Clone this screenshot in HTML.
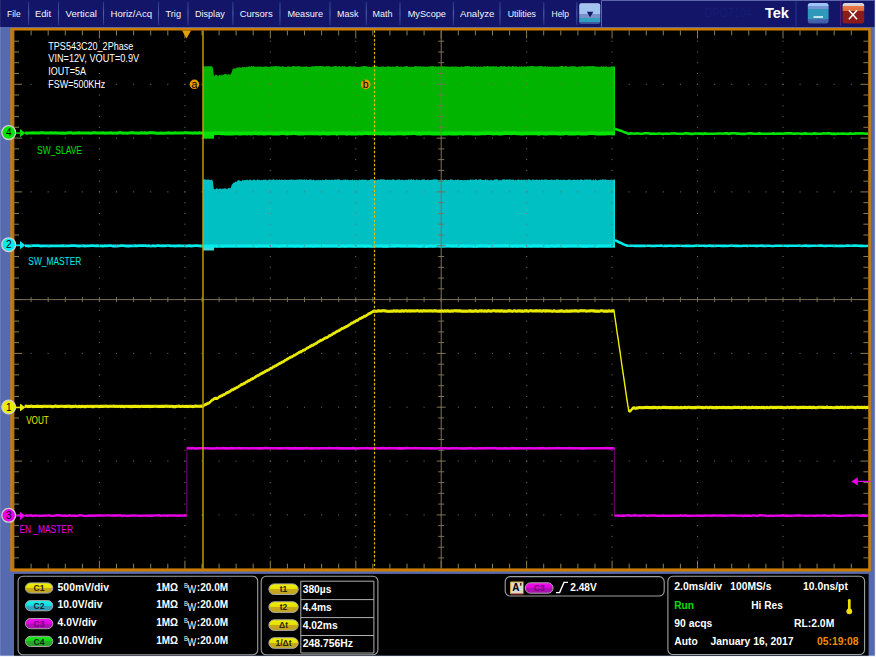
<!DOCTYPE html>
<html><head><meta charset="utf-8"><title>TPS543C20 scope capture</title>
<style>html,body{margin:0;padding:0;background:#566ab0;overflow:hidden}svg{display:block;font-family:"Liberation Sans",sans-serif}</style>
</head><body>
<svg width="876" height="657" viewBox="0 0 876 657">
<rect x="0" y="0" width="876" height="657" fill="#566ab0"/>
<rect x="0" y="0" width="874.8" height="27" fill="#121568"/>
<rect x="0" y="0" width="1" height="27" fill="#232a70"/>
<rect x="0" y="27" width="1" height="630" fill="#6878b8"/>
<rect x="874.8" y="0" width="1.2" height="657" fill="#f4f5fa"/>
<rect x="0" y="655.7" width="876" height="1.3" fill="#f4f5fa"/>
<path d="M601.5 27V0.5H875" stroke="#5a64a8" stroke-width="1" fill="none"/>
<text x="7" y="16.7" font-size="9" fill="#f4f4fa" textLength="13.6" lengthAdjust="spacingAndGlyphs" >File</text>
<text x="35" y="16.7" font-size="9" fill="#f4f4fa" textLength="16" lengthAdjust="spacingAndGlyphs" >Edit</text>
<text x="65.5" y="16.7" font-size="9" fill="#f4f4fa" textLength="31.5" lengthAdjust="spacingAndGlyphs" >Vertical</text>
<text x="110.5" y="16.7" font-size="9" fill="#f4f4fa" textLength="41.5" lengthAdjust="spacingAndGlyphs" >Horiz/Acq</text>
<text x="165.5" y="16.7" font-size="9" fill="#f4f4fa" textLength="15.5" lengthAdjust="spacingAndGlyphs" >Trig</text>
<text x="195" y="16.7" font-size="9" fill="#f4f4fa" textLength="29.7" lengthAdjust="spacingAndGlyphs" >Display</text>
<text x="239.7" y="16.7" font-size="9" fill="#f4f4fa" textLength="32.9" lengthAdjust="spacingAndGlyphs" >Cursors</text>
<text x="287.4" y="16.7" font-size="9" fill="#f4f4fa" textLength="35.6" lengthAdjust="spacingAndGlyphs" >Measure</text>
<text x="337" y="16.7" font-size="9" fill="#f4f4fa" textLength="21.4" lengthAdjust="spacingAndGlyphs" >Mask</text>
<text x="372.6" y="16.7" font-size="9" fill="#f4f4fa" textLength="20.0" lengthAdjust="spacingAndGlyphs" >Math</text>
<text x="407.7" y="16.7" font-size="9" fill="#f4f4fa" textLength="38.3" lengthAdjust="spacingAndGlyphs" >MyScope</text>
<text x="460" y="16.7" font-size="9" fill="#f4f4fa" textLength="34.5" lengthAdjust="spacingAndGlyphs" >Analyze</text>
<text x="507.7" y="16.7" font-size="9" fill="#f4f4fa" textLength="28.3" lengthAdjust="spacingAndGlyphs" >Utilities</text>
<text x="551.5" y="16.7" font-size="9" fill="#f4f4fa" textLength="17.5" lengthAdjust="spacingAndGlyphs" >Help</text>
<defs><linearGradient id="sepg" x1="0" y1="0" x2="0" y2="1"><stop offset="0" stop-color="#2a3484"/><stop offset="0.5" stop-color="#4c60b0"/><stop offset="1" stop-color="#2a3484"/></linearGradient></defs>
<rect x="28.05" y="2" width="1.1" height="23" fill="url(#sepg)"/>
<rect x="57.95" y="2" width="1.1" height="23" fill="url(#sepg)"/>
<rect x="102.95" y="2" width="1.1" height="23" fill="url(#sepg)"/>
<rect x="157.95" y="2" width="1.1" height="23" fill="url(#sepg)"/>
<rect x="187.45" y="2" width="1.1" height="23" fill="url(#sepg)"/>
<rect x="232.35" y="2" width="1.1" height="23" fill="url(#sepg)"/>
<rect x="279.45" y="2" width="1.1" height="23" fill="url(#sepg)"/>
<rect x="329.45" y="2" width="1.1" height="23" fill="url(#sepg)"/>
<rect x="365.75" y="2" width="1.1" height="23" fill="url(#sepg)"/>
<rect x="399.45" y="2" width="1.1" height="23" fill="url(#sepg)"/>
<rect x="452.85" y="2" width="1.1" height="23" fill="url(#sepg)"/>
<rect x="499.45" y="2" width="1.1" height="23" fill="url(#sepg)"/>
<rect x="543.25" y="2" width="1.1" height="23" fill="url(#sepg)"/>
<rect x="576.25" y="2" width="1.1" height="23" fill="url(#sepg)"/>
<path d="M796 1V26" stroke="#2c3688" stroke-width="1" fill="none"/>
<path d="M840.7 1V26" stroke="#5a2080" stroke-width="1" fill="none"/>
<defs>
<linearGradient id="gdd" x1="0" y1="0" x2="0" y2="1"><stop offset="0" stop-color="#c4d4f2"/><stop offset="0.07" stop-color="#a2c2f0"/><stop offset="0.52" stop-color="#a2c2f0"/><stop offset="0.53" stop-color="#7a90c8"/><stop offset="0.7" stop-color="#7a90c8"/><stop offset="0.71" stop-color="#30a0c0"/><stop offset="0.9" stop-color="#30a0c0"/><stop offset="0.91" stop-color="#4060a8"/><stop offset="1" stop-color="#3a5090"/></linearGradient>
<linearGradient id="gmin" x1="0" y1="0" x2="0" y2="1"><stop offset="0" stop-color="#9cc4f4"/><stop offset="0.16" stop-color="#9cc4f4"/><stop offset="0.17" stop-color="#7494d4"/><stop offset="0.3" stop-color="#7494d4"/><stop offset="0.31" stop-color="#3098b8"/><stop offset="0.78" stop-color="#3098b8"/><stop offset="0.79" stop-color="#4868b0"/><stop offset="1" stop-color="#3c5aa0"/></linearGradient>
<linearGradient id="gcls" x1="0" y1="0" x2="0" y2="1"><stop offset="0" stop-color="#e0d8d8"/><stop offset="0.15" stop-color="#d8cccc"/><stop offset="0.16" stop-color="#e87848"/><stop offset="0.38" stop-color="#e06838"/><stop offset="0.39" stop-color="#8c1c1c"/><stop offset="1" stop-color="#8c1c1c"/></linearGradient>
<linearGradient id="by" x1="0" y1="0" x2="0" y2="1"><stop offset="0" stop-color="#f0f000"/><stop offset="0.5" stop-color="#e4e000"/><stop offset="0.51" stop-color="#c8a81c"/><stop offset="1" stop-color="#c0a420"/></linearGradient>
<linearGradient id="bc" x1="0" y1="0" x2="0" y2="1"><stop offset="0" stop-color="#20f0f0"/><stop offset="0.5" stop-color="#10dce0"/><stop offset="0.51" stop-color="#30a8c0"/><stop offset="1" stop-color="#30a0b8"/></linearGradient>
<linearGradient id="bm" x1="0" y1="0" x2="0" y2="1"><stop offset="0" stop-color="#f010f0"/><stop offset="0.5" stop-color="#e000e0"/><stop offset="0.51" stop-color="#b010b8"/><stop offset="1" stop-color="#a810b0"/></linearGradient>
<linearGradient id="bg" x1="0" y1="0" x2="0" y2="1"><stop offset="0" stop-color="#20e820"/><stop offset="0.5" stop-color="#10d810"/><stop offset="0.51" stop-color="#28a828"/><stop offset="1" stop-color="#28a028"/></linearGradient>
</defs>
<rect x="579.2" y="3.2" width="21" height="20.8" rx="2" fill="url(#gdd)"/>
<path d="M586.8 11.8h6.6l-3.3 5.4z" fill="#121568"/>
<text x="704.5" y="17" font-size="12" fill="#181c72" textLength="47.5" lengthAdjust="spacingAndGlyphs" >DPO7104</text>
<text x="764.9" y="18" font-size="14" fill="#fff" font-weight="bold" textLength="24" lengthAdjust="spacingAndGlyphs" >Tek</text>
<rect x="807.8" y="3" width="20.8" height="20.6" rx="2.5" fill="url(#gmin)"/>
<path d="M813.5 17H823" stroke="#fff" stroke-width="1.4"/>
<rect x="842.6" y="3" width="21.6" height="20.4" rx="2.5" fill="url(#gcls)"/>
<path d="M848.9 10.3L857 19.3M857 10.3L848.9 19.3" stroke="#fff" stroke-width="1.5"/>
<rect x="14" y="573.9" width="854.6" height="81.7" fill="#000"/>
<rect x="18.1" y="576.2" width="239.6" height="78.6" rx="5" fill="#000" stroke="#a0a0a0" stroke-width="1.1"/>
<rect x="261.2" y="576.2" width="116.7" height="78.6" rx="5" fill="#000" stroke="#a0a0a0" stroke-width="1.1"/>
<rect x="505.2" y="576.6" width="159.0" height="19.4" rx="5" fill="#000" stroke="#a0a0a0" stroke-width="1.1"/>
<rect x="667.9" y="576.2" width="196.7" height="78.3" rx="5" fill="#000" stroke="#a0a0a0" stroke-width="1.1"/>
<rect x="25.4" y="582.9" width="27.4" height="10.2" rx="5.1" fill="url(#by)" stroke="#a8a8a8" stroke-width="1"/><text x="39.099999999999994" y="591.1" font-size="8.6" font-weight="bold" text-anchor="middle" fill="#2c2800">C1</text>
<text x="57.6" y="590.6" font-size="10" fill="#fff" font-weight="bold" textLength="51.4" lengthAdjust="spacingAndGlyphs" >500mV/div</text>
<text x="156.2" y="590.6" font-size="10" fill="#fff" font-weight="bold" textLength="21.8" lengthAdjust="spacingAndGlyphs" >1MΩ</text>
<text x="183.9" y="587.8" font-size="7" fill="#fff" textLength="3.9" lengthAdjust="spacingAndGlyphs" >B</text>
<text x="187.5" y="593" font-size="10" fill="#fff" textLength="8.7" lengthAdjust="spacingAndGlyphs" >W</text>
<text x="196.8" y="590.6" font-size="10" fill="#fff" font-weight="bold" textLength="31.3" lengthAdjust="spacingAndGlyphs" >:20.0M</text>
<rect x="25.4" y="600.6" width="27.4" height="10.2" rx="5.1" fill="url(#bc)" stroke="#a8a8a8" stroke-width="1"/><text x="39.099999999999994" y="608.8" font-size="8.6" font-weight="bold" text-anchor="middle" fill="#08282c">C2</text>
<text x="57.6" y="608.3" font-size="10" fill="#fff" font-weight="bold" textLength="44.8" lengthAdjust="spacingAndGlyphs" >10.0V/div</text>
<text x="156.2" y="608.3" font-size="10" fill="#fff" font-weight="bold" textLength="21.8" lengthAdjust="spacingAndGlyphs" >1MΩ</text>
<text x="183.9" y="605.5" font-size="7" fill="#fff" textLength="3.9" lengthAdjust="spacingAndGlyphs" >B</text>
<text x="187.5" y="610.7" font-size="10" fill="#fff" textLength="8.7" lengthAdjust="spacingAndGlyphs" >W</text>
<text x="196.8" y="608.3" font-size="10" fill="#fff" font-weight="bold" textLength="31.3" lengthAdjust="spacingAndGlyphs" >:20.0M</text>
<rect x="25.4" y="618.5" width="27.4" height="10.2" rx="5.1" fill="url(#bm)" stroke="#a8a8a8" stroke-width="1"/><text x="39.099999999999994" y="626.7" font-size="8.6" font-weight="bold" text-anchor="middle" fill="#780078">C3</text>
<text x="57.6" y="626.2" font-size="10" fill="#fff" font-weight="bold" textLength="39" lengthAdjust="spacingAndGlyphs" >4.0V/div</text>
<text x="156.2" y="626.2" font-size="10" fill="#fff" font-weight="bold" textLength="21.8" lengthAdjust="spacingAndGlyphs" >1MΩ</text>
<text x="183.9" y="623.4" font-size="7" fill="#fff" textLength="3.9" lengthAdjust="spacingAndGlyphs" >B</text>
<text x="187.5" y="628.6" font-size="10" fill="#fff" textLength="8.7" lengthAdjust="spacingAndGlyphs" >W</text>
<text x="196.8" y="626.2" font-size="10" fill="#fff" font-weight="bold" textLength="31.3" lengthAdjust="spacingAndGlyphs" >:20.0M</text>
<rect x="25.4" y="636.3" width="27.4" height="10.2" rx="5.1" fill="url(#bg)" stroke="#a8a8a8" stroke-width="1"/><text x="39.099999999999994" y="644.5" font-size="8.6" font-weight="bold" text-anchor="middle" fill="#082808">C4</text>
<text x="57.6" y="644.0" font-size="10" fill="#fff" font-weight="bold" textLength="44.8" lengthAdjust="spacingAndGlyphs" >10.0V/div</text>
<text x="156.2" y="644.0" font-size="10" fill="#fff" font-weight="bold" textLength="21.8" lengthAdjust="spacingAndGlyphs" >1MΩ</text>
<text x="183.9" y="641.2" font-size="7" fill="#fff" textLength="3.9" lengthAdjust="spacingAndGlyphs" >B</text>
<text x="187.5" y="646.4" font-size="10" fill="#fff" textLength="8.7" lengthAdjust="spacingAndGlyphs" >W</text>
<text x="196.8" y="644.0" font-size="10" fill="#fff" font-weight="bold" textLength="31.3" lengthAdjust="spacingAndGlyphs" >:20.0M</text>
<path d="M300.8 581.2H373.9V653H300.8ZM300.8 599.6H373.9M300.8 617.6H373.9M300.8 635.5H373.9" stroke="#b0b0b0" stroke-width="1" fill="none"/>
<rect x="268.9" y="583.9" width="29.3" height="10.6" rx="5.3" fill="url(#by)" stroke="#a8a8a8" stroke-width="1"/><text x="283.54999999999995" y="592.3" font-size="8.5" font-weight="bold" text-anchor="middle" fill="#2c2800">t1</text>
<text x="302.7" y="593.2" font-size="10.5" fill="#fff" font-weight="bold" textLength="28.8" lengthAdjust="spacingAndGlyphs" >380µs</text>
<rect x="268.9" y="601.8" width="29.3" height="10.6" rx="5.3" fill="url(#by)" stroke="#a8a8a8" stroke-width="1"/><text x="283.54999999999995" y="610.2" font-size="8.5" font-weight="bold" text-anchor="middle" fill="#2c2800">t2</text>
<text x="302.7" y="611.1" font-size="10.5" fill="#fff" font-weight="bold" textLength="29" lengthAdjust="spacingAndGlyphs" >4.4ms</text>
<rect x="268.9" y="619.8" width="29.3" height="10.6" rx="5.3" fill="url(#by)" stroke="#a8a8a8" stroke-width="1"/><text x="283.54999999999995" y="628.2" font-size="8.5" font-weight="bold" text-anchor="middle" fill="#2c2800">Δt</text>
<text x="302.7" y="629.1" font-size="10.5" fill="#fff" font-weight="bold" textLength="35" lengthAdjust="spacingAndGlyphs" >4.02ms</text>
<rect x="268.9" y="637.7" width="29.3" height="10.6" rx="5.3" fill="url(#by)" stroke="#a8a8a8" stroke-width="1"/><text x="283.54999999999995" y="646.1" font-size="8.5" font-weight="bold" text-anchor="middle" fill="#2c2800">1/Δt</text>
<text x="302.7" y="647" font-size="10.5" fill="#fff" font-weight="bold" textLength="50.3" lengthAdjust="spacingAndGlyphs" >248.756Hz</text>
<rect x="510.6" y="582" width="13" height="11.9" fill="#dcdccc"/>
<path d="M510.6 594V582H523.6" stroke="#d8b040" stroke-width="1" fill="none"/><path d="M510.6 594H523.6V582" stroke="#c03020" stroke-width="1" fill="none"/>
<text x="512.3" y="591.3" font-size="10.5" fill="#000" font-weight="bold" textLength="9.6" lengthAdjust="spacingAndGlyphs" >A'</text>
<rect x="525.3" y="582.8" width="27.8" height="10.4" rx="5.2" fill="url(#bm)" stroke="#a8a8a8" stroke-width="1"/><text x="539.1999999999999" y="591.1" font-size="8.6" font-weight="bold" text-anchor="middle" fill="#780078">C3</text>
<path d="M556 592.6H559.6L564 582.4H568" stroke="#fff" stroke-width="1.4" fill="none"/>
<text x="570.3" y="590.7" font-size="10.5" fill="#fff" font-weight="bold" textLength="26.4" lengthAdjust="spacingAndGlyphs" >2.48V</text>
<text x="674.3" y="590.3" font-size="10.5" fill="#fff" font-weight="bold" textLength="47.7" lengthAdjust="spacingAndGlyphs" >2.0ms/div</text>
<text x="730.3" y="590.3" font-size="10.5" fill="#fff" font-weight="bold" textLength="41.1" lengthAdjust="spacingAndGlyphs" >100MS/s</text>
<text x="803" y="590.3" font-size="10.5" fill="#fff" font-weight="bold" textLength="44.9" lengthAdjust="spacingAndGlyphs" >10.0ns/pt</text>
<text x="674.3" y="608.8" font-size="10.5" fill="#00e000" font-weight="bold" textLength="19.7" lengthAdjust="spacingAndGlyphs" >Run</text>
<text x="751.2" y="608.8" font-size="10.5" fill="#fff" font-weight="bold" textLength="31.6" lengthAdjust="spacingAndGlyphs" >Hi Res</text>
<path d="M849.3 600.3V611" stroke="#f0e000" stroke-width="2.7" stroke-linecap="round"/><circle cx="849.3" cy="611.3" r="2.9" fill="#f0e000"/>
<text x="674.3" y="626.6" font-size="10.5" fill="#fff" font-weight="bold" textLength="38" lengthAdjust="spacingAndGlyphs" >90 acqs</text>
<text x="793.9" y="626.6" font-size="10.5" fill="#fff" font-weight="bold" textLength="40.4" lengthAdjust="spacingAndGlyphs" >RL:2.0M</text>
<text x="674.3" y="644.6" font-size="10.5" fill="#fff" font-weight="bold" textLength="23.4" lengthAdjust="spacingAndGlyphs" >Auto</text>
<text x="710.5" y="644.6" font-size="10.5" fill="#fff" font-weight="bold" textLength="83.1" lengthAdjust="spacingAndGlyphs" >January 16, 2017</text>
<text x="817" y="644.6" font-size="10.5" fill="#f08c00" font-weight="bold" textLength="41.5" lengthAdjust="spacingAndGlyphs" >05:19:08</text>
<rect x="10.3" y="27.9" width="860.5" height="543.6" fill="#cc7c00"/>
<rect x="12.5" y="30" width="2" height="538.8" fill="#a87428"/>
<rect x="14.4" y="30.5" width="853.8" height="537.9" fill="#000"/>
<path d="M31.1 30.45v5M31.1 568.7v-5M48.2 30.45v5M48.2 568.7v-5M65.3 30.45v5M65.3 568.7v-5M82.4 30.45v5M82.4 568.7v-5M99.4 30.45v8M99.4 568.7v-8M116.5 30.45v5M116.5 568.7v-5M133.6 30.45v5M133.6 568.7v-5M150.7 30.45v5M150.7 568.7v-5M167.8 30.45v5M167.8 568.7v-5M184.9 30.45v8M184.9 568.7v-8M202.0 30.45v5M202.0 568.7v-5M219.1 30.45v5M219.1 568.7v-5M236.1 30.45v5M236.1 568.7v-5M253.2 30.45v5M253.2 568.7v-5M270.3 30.45v8M270.3 568.7v-8M287.4 30.45v5M287.4 568.7v-5M304.5 30.45v5M304.5 568.7v-5M321.6 30.45v5M321.6 568.7v-5M338.7 30.45v5M338.7 568.7v-5M355.8 30.45v8M355.8 568.7v-8M372.8 30.45v5M372.8 568.7v-5M389.9 30.45v5M389.9 568.7v-5M407.0 30.45v5M407.0 568.7v-5M424.1 30.45v5M424.1 568.7v-5M441.2 30.45v8M441.2 568.7v-8M458.3 30.45v5M458.3 568.7v-5M475.4 30.45v5M475.4 568.7v-5M492.5 30.45v5M492.5 568.7v-5M509.6 30.45v5M509.6 568.7v-5M526.6 30.45v8M526.6 568.7v-8M543.7 30.45v5M543.7 568.7v-5M560.8 30.45v5M560.8 568.7v-5M577.9 30.45v5M577.9 568.7v-5M595.0 30.45v5M595.0 568.7v-5M612.1 30.45v8M612.1 568.7v-8M629.2 30.45v5M629.2 568.7v-5M646.3 30.45v5M646.3 568.7v-5M663.3 30.45v5M663.3 568.7v-5M680.4 30.45v5M680.4 568.7v-5M697.5 30.45v8M697.5 568.7v-8M714.6 30.45v5M714.6 568.7v-5M731.7 30.45v5M731.7 568.7v-5M748.8 30.45v5M748.8 568.7v-5M765.9 30.45v5M765.9 568.7v-5M783.0 30.45v8M783.0 568.7v-8M800.0 30.45v5M800.0 568.7v-5M817.1 30.45v5M817.1 568.7v-5M834.2 30.45v5M834.2 568.7v-5M851.3 30.45v5M851.3 568.7v-5M14.0 41.2h5M868.4 41.2h-5M14.0 52.0h5M868.4 52.0h-5M14.0 62.7h5M868.4 62.7h-5M14.0 73.5h5M868.4 73.5h-5M14.0 84.3h8M868.4 84.3h-8M14.0 95.0h5M868.4 95.0h-5M14.0 105.8h5M868.4 105.8h-5M14.0 116.6h5M868.4 116.6h-5M14.0 127.3h5M868.4 127.3h-5M14.0 138.1h8M868.4 138.1h-8M14.0 148.9h5M868.4 148.9h-5M14.0 159.6h5M868.4 159.6h-5M14.0 170.4h5M868.4 170.4h-5M14.0 181.2h5M868.4 181.2h-5M14.0 191.9h8M868.4 191.9h-8M14.0 202.7h5M868.4 202.7h-5M14.0 213.5h5M868.4 213.5h-5M14.0 224.2h5M868.4 224.2h-5M14.0 235.0h5M868.4 235.0h-5M14.0 245.8h8M868.4 245.8h-8M14.0 256.5h5M868.4 256.5h-5M14.0 267.3h5M868.4 267.3h-5M14.0 278.0h5M868.4 278.0h-5M14.0 288.8h5M868.4 288.8h-5M14.0 299.6h8M868.4 299.6h-8M14.0 310.3h5M868.4 310.3h-5M14.0 321.1h5M868.4 321.1h-5M14.0 331.9h5M868.4 331.9h-5M14.0 342.6h5M868.4 342.6h-5M14.0 353.4h8M868.4 353.4h-8M14.0 364.2h5M868.4 364.2h-5M14.0 374.9h5M868.4 374.9h-5M14.0 385.7h5M868.4 385.7h-5M14.0 396.5h5M868.4 396.5h-5M14.0 407.2h8M868.4 407.2h-8M14.0 418.0h5M868.4 418.0h-5M14.0 428.8h5M868.4 428.8h-5M14.0 439.5h5M868.4 439.5h-5M14.0 450.3h5M868.4 450.3h-5M14.0 461.1h8M868.4 461.1h-8M14.0 471.8h5M868.4 471.8h-5M14.0 482.6h5M868.4 482.6h-5M14.0 493.3h5M868.4 493.3h-5M14.0 504.1h5M868.4 504.1h-5M14.0 514.9h8M868.4 514.9h-8M14.0 525.6h5M868.4 525.6h-5M14.0 536.4h5M868.4 536.4h-5M14.0 547.2h5M868.4 547.2h-5M14.0 557.9h5M868.4 557.9h-5" stroke="#8c7c50" stroke-width="1" fill="none"/>
<path d="M203.0 135L203.0 66.3L203.9 66.1L204.8 66.7L205.7 66.0L206.6 66.5L207.5 66.3L208.4 66.0L209.3 66.5L210.2 65.9L211.1 66.4L212.0 66.0L212.9 68.0L213.8 75.3L214.7 75.9L215.6 74.6L216.5 74.7L217.4 75.4L218.3 75.9L219.2 75.2L220.1 74.8L221.0 75.8L221.9 74.1L222.8 75.5L223.7 74.4L224.6 74.1L225.5 74.0L226.4 74.3L227.3 75.1L228.2 73.9L229.1 74.6L230.0 74.7L230.9 74.1L231.8 72.1L232.7 68.9L233.6 68.5L234.5 68.3L235.4 68.8L236.3 67.9L237.2 67.3L238.1 67.8L239.0 67.4L239.9 67.1L240.8 67.9L241.7 67.6L242.6 66.7L243.5 67.2L244.4 67.1L245.3 67.6L246.2 67.1L247.1 66.5L248.0 67.3L248.9 66.1L249.8 66.4L250.7 66.8L251.6 66.1L252.5 66.5L253.4 65.9L254.3 66.7L255.2 66.8L256.1 66.6L257.0 67.0L257.9 66.3L258.8 66.7L259.7 66.6L260.6 66.6L261.5 66.4L262.4 66.9L263.3 67.0L264.2 66.5L265.1 66.7L266.0 66.0L266.9 66.7L267.8 66.7L268.7 67.1L269.6 66.9L270.5 66.2L271.4 66.4L272.3 66.7L273.2 65.9L274.1 66.5L275.0 66.1L275.9 66.0L276.8 66.0L277.7 66.8L278.6 66.1L279.5 66.2L280.4 66.4L281.3 66.9L282.2 66.0L283.1 66.4L284.0 66.6L284.9 67.0L285.8 66.9L286.7 66.9L287.6 66.2L288.5 66.4L289.4 66.3L290.3 67.0L291.2 67.0L292.1 66.1L293.0 66.1L293.9 66.2L294.8 66.2L295.7 66.5L296.6 66.6L297.5 66.2L298.4 65.9L299.3 66.4L300.2 66.3L301.1 66.6L302.0 67.0L302.9 66.7L303.8 66.5L304.7 66.6L305.6 66.7L306.5 66.0L307.4 67.0L308.3 66.8L309.2 66.9L310.1 66.9L311.0 66.4L311.9 66.4L312.8 66.0L313.7 66.7L314.6 66.0L315.5 66.0L316.4 66.2L317.3 66.1L318.2 66.3L319.1 66.0L320.0 65.9L320.9 66.1L321.8 66.0L322.7 66.3L323.6 65.9L324.5 66.9L325.4 66.6L326.3 66.1L327.2 66.2L328.1 66.3L329.0 66.3L329.9 66.0L330.8 66.9L331.7 67.1L332.6 66.5L333.5 66.5L334.4 66.0L335.3 66.0L336.2 66.3L337.1 66.2L338.0 66.9L338.9 66.1L339.8 65.9L340.7 67.0L341.6 66.5L342.5 66.1L343.4 66.6L344.3 65.9L345.2 66.5L346.1 67.1L347.0 66.9L347.9 66.7L348.8 66.2L349.7 66.3L350.6 66.1L351.5 66.8L352.4 66.5L353.3 66.8L354.2 66.3L355.1 66.2L356.0 66.9L356.9 67.1L357.8 66.9L358.7 66.9L359.6 66.9L360.5 66.8L361.4 66.2L362.3 66.5L363.2 66.3L364.1 65.9L365.0 65.9L365.9 66.2L366.8 66.2L367.7 66.7L368.6 67.0L369.5 66.4L370.4 67.0L371.3 67.1L372.2 67.0L373.1 66.3L374.0 66.2L374.9 66.2L375.8 66.1L376.7 66.1L377.6 66.6L378.5 67.0L379.4 66.9L380.3 66.5L381.2 66.7L382.1 66.9L383.0 66.0L383.9 66.7L384.8 67.0L385.7 66.8L386.6 66.8L387.5 66.5L388.4 66.1L389.3 66.8L390.2 66.3L391.1 66.9L392.0 67.1L392.9 66.4L393.8 66.4L394.7 67.0L395.6 66.8L396.5 66.1L397.4 66.1L398.3 66.1L399.2 67.0L400.1 66.9L401.0 66.1L401.9 66.9L402.8 67.1L403.7 66.7L404.6 66.3L405.5 66.6L406.4 66.1L407.3 65.9L408.2 67.1L409.1 66.7L410.0 66.5L410.9 67.0L411.8 66.4L412.7 66.9L413.6 66.9L414.5 66.2L415.4 66.2L416.3 66.3L417.2 66.2L418.1 66.6L419.0 66.2L419.9 66.4L420.8 66.1L421.7 67.0L422.6 66.3L423.5 66.4L424.4 66.6L425.3 67.0L426.2 66.4L427.1 67.0L428.0 66.5L428.9 66.5L429.8 66.5L430.7 65.9L431.6 66.4L432.5 66.1L433.4 65.9L434.3 66.9L435.2 66.1L436.1 66.5L437.0 66.8L437.9 66.6L438.8 66.3L439.7 66.5L440.6 66.6L441.5 66.8L442.4 66.0L443.3 66.6L444.2 66.2L445.1 66.2L446.0 66.8L446.9 66.5L447.8 66.6L448.7 66.8L449.6 67.0L450.5 66.4L451.4 66.6L452.3 66.5L453.2 66.5L454.1 66.7L455.0 66.4L455.9 66.5L456.8 66.5L457.7 67.0L458.6 66.7L459.5 67.0L460.4 67.0L461.3 66.2L462.2 66.6L463.1 67.0L464.0 66.9L464.9 66.1L465.8 66.0L466.7 66.4L467.6 66.0L468.5 66.2L469.4 66.0L470.3 66.7L471.2 66.8L472.1 67.0L473.0 66.1L473.9 66.8L474.8 66.7L475.7 66.1L476.6 67.0L477.5 67.1L478.4 66.2L479.3 67.0L480.2 66.4L481.1 66.5L482.0 67.1L482.9 66.9L483.8 66.1L484.7 66.4L485.6 66.5L486.5 66.3L487.4 66.1L488.3 66.3L489.2 66.8L490.1 65.9L491.0 66.6L491.9 66.4L492.8 65.9L493.7 66.3L494.6 66.6L495.5 66.5L496.4 66.0L497.3 67.1L498.2 66.8L499.1 67.1L500.0 66.0L500.9 66.2L501.8 65.9L502.7 66.8L503.6 66.2L504.5 66.1L505.4 66.4L506.3 67.0L507.2 66.9L508.1 66.2L509.0 66.1L509.9 67.0L510.8 66.6L511.7 66.7L512.6 66.0L513.5 66.0L514.4 66.7L515.3 66.4L516.2 66.0L517.1 67.0L518.0 66.7L518.9 66.9L519.8 66.0L520.7 66.9L521.6 66.0L522.5 66.9L523.4 66.4L524.3 66.3L525.2 66.6L526.1 67.0L527.0 66.2L527.9 66.1L528.8 66.5L529.7 66.2L530.6 66.0L531.5 66.1L532.4 66.0L533.3 66.1L534.2 66.3L535.1 66.3L536.0 66.8L536.9 66.2L537.8 66.5L538.7 66.1L539.6 66.3L540.5 65.9L541.4 66.2L542.3 65.9L543.2 66.8L544.1 66.6L545.0 66.1L545.9 66.5L546.8 67.0L547.7 66.0L548.6 66.9L549.5 66.4L550.4 66.5L551.3 66.9L552.2 66.4L553.1 66.5L554.0 66.7L554.9 67.1L555.8 66.3L556.7 66.9L557.6 66.7L558.5 66.7L559.4 66.4L560.3 66.3L561.2 66.0L562.1 66.1L563.0 66.0L563.9 66.8L564.8 66.2L565.7 66.1L566.6 66.0L567.5 66.9L568.4 66.9L569.3 66.7L570.2 66.2L571.1 66.2L572.0 66.3L572.9 66.5L573.8 66.1L574.7 66.4L575.6 66.2L576.5 67.1L577.4 67.1L578.3 66.6L579.2 66.2L580.1 67.1L581.0 66.3L581.9 66.3L582.8 65.9L583.7 66.4L584.6 66.5L585.5 66.5L586.4 66.1L587.3 66.5L588.2 65.9L589.1 66.2L590.0 66.0L590.9 66.4L591.8 66.0L592.7 65.9L593.6 66.3L594.5 66.2L595.4 66.6L596.3 66.5L597.2 66.8L598.1 66.7L599.0 66.8L599.9 67.0L600.8 66.4L601.7 66.3L602.6 67.1L603.5 66.1L604.4 66.8L605.3 66.7L606.2 66.0L607.1 66.9L608.0 67.0L608.9 66.7L609.8 66.8L610.7 66.9L611.6 66.1L612.5 66.5L613.4 66.5L614.3 66.9L615.0 135Z" fill="#00b400"/>
<rect x="203" y="134.5" width="11" height="4.2" fill="#00dc00"/>
<rect x="613.4" y="66.5" width="1.6" height="68" fill="#00d000"/>
<path d="M203.0 133.6L205.0 133.6L207.0 133.5L209.0 133.6L211.0 133.5L213.0 133.5L215.0 133.2L217.0 133.1L219.0 133.2L221.0 133.3L223.0 133.2L225.0 133.6L227.0 133.4L229.0 133.5L231.0 133.5L233.0 133.5L235.0 133.4L237.0 133.1L239.0 133.6L241.0 133.5L243.0 133.4L245.0 133.4L247.0 133.5L249.0 133.1L251.0 133.5L253.0 133.3L255.0 133.1L257.0 133.3L259.0 133.5L261.0 133.2L263.0 133.5L265.0 133.7L267.0 133.4L269.0 133.3L271.0 133.4L273.0 133.5L275.0 133.6L277.0 133.5L279.0 133.5L281.0 133.1L283.0 133.2L285.0 133.3L287.0 133.5L289.0 133.3L291.0 133.4L293.0 133.1L295.0 133.1L297.0 133.3L299.0 133.5L301.0 133.5L303.0 133.5L305.0 133.3L307.0 133.4L309.0 133.4L311.0 133.4L313.0 133.2L315.0 133.6L317.0 133.2L319.0 133.7L321.0 133.7L323.0 133.1L325.0 133.4L327.0 133.6L329.0 133.7L331.0 133.4L333.0 133.3L335.0 133.2L337.0 133.7L339.0 133.2L341.0 133.4L343.0 133.2L345.0 133.4L347.0 133.7L349.0 133.2L351.0 133.6L353.0 133.4L355.0 133.6L357.0 133.5L359.0 133.2L361.0 133.6L363.0 133.4L365.0 133.1L367.0 133.1L369.0 133.4L371.0 133.4L373.0 133.3L375.0 133.2L377.0 133.3L379.0 133.3L381.0 133.6L383.0 133.1L385.0 133.6L387.0 133.6L389.0 133.2L391.0 133.7L393.0 133.5L395.0 133.6L397.0 133.3L399.0 133.3L401.0 133.3L403.0 133.7L405.0 133.5L407.0 133.3L409.0 133.4L411.0 133.3L413.0 133.1L415.0 133.2L417.0 133.6L419.0 133.3L421.0 133.7L423.0 133.2L425.0 133.3L427.0 133.4L429.0 133.2L431.0 133.3L433.0 133.7L435.0 133.6L437.0 133.6L439.0 133.5L441.0 133.6L443.0 133.7L445.0 133.4L447.0 133.5L449.0 133.1L451.0 133.5L453.0 133.4L455.0 133.6L457.0 133.5L459.0 133.3L461.0 133.1L463.0 133.7L465.0 133.2L467.0 133.4L469.0 133.3L471.0 133.3L473.0 133.5L475.0 133.7L477.0 133.3L479.0 133.5L481.0 133.3L483.0 133.4L485.0 133.3L487.0 133.2L489.0 133.2L491.0 133.2L493.0 133.6L495.0 133.4L497.0 133.2L499.0 133.6L501.0 133.7L503.0 133.4L505.0 133.2L507.0 133.2L509.0 133.2L511.0 133.3L513.0 133.2L515.0 133.2L517.0 133.3L519.0 133.4L521.0 133.6L523.0 133.5L525.0 133.3L527.0 133.3L529.0 133.4L531.0 133.3L533.0 133.3L535.0 133.1L537.0 133.3L539.0 133.7L541.0 133.2L543.0 133.4L545.0 133.5L547.0 133.6L549.0 133.2L551.0 133.3L553.0 133.2L555.0 133.3L557.0 133.4L559.0 133.7L561.0 133.6L563.0 133.6L565.0 133.1L567.0 133.1L569.0 133.5L571.0 133.6L573.0 133.4L575.0 133.5L577.0 133.1L579.0 133.3L581.0 133.7L583.0 133.6L585.0 133.6L587.0 133.7L589.0 133.2L591.0 133.2L593.0 133.2L595.0 133.4L597.0 133.5L599.0 133.7L601.0 133.5L603.0 133.5L605.0 133.6L607.0 133.4L609.0 133.4L611.0 133.1L613.0 133.6L615.0 133.4" stroke="#00e400" stroke-width="3.8" fill="none"/>
<path d="M25.0 132.8L27.0 133.3L29.0 133.1L31.0 132.9L33.0 132.8L35.0 132.9L37.0 133.1L39.0 133.1L41.0 132.8L43.0 132.7L45.0 133.0L47.0 133.0L49.0 132.9L51.0 132.8L53.0 133.1L55.0 132.7L57.0 132.9L59.0 133.0L61.0 133.3L63.0 133.1L65.0 133.2L67.0 133.0L69.0 132.8L71.0 132.8L73.0 133.3L75.0 133.1L77.0 132.9L79.0 132.7L81.0 133.0L83.0 133.1L85.0 133.0L87.0 132.9L89.0 133.1L91.0 133.3L93.0 132.8L95.0 132.7L97.0 132.9L99.0 133.0L101.0 133.1L103.0 132.8L105.0 133.2L107.0 133.1L109.0 133.0L111.0 132.8L113.0 133.3L115.0 132.9L117.0 133.2L119.0 132.8L121.0 132.8L123.0 133.2L125.0 132.9L127.0 133.3L129.0 133.0L131.0 132.8L133.0 132.8L135.0 133.0L137.0 133.1L139.0 133.3L141.0 132.8L143.0 132.9L145.0 132.8L147.0 133.3L149.0 132.8L151.0 132.7L153.0 132.7L155.0 132.9L157.0 133.2L159.0 133.2L161.0 133.1L163.0 133.3L165.0 133.3L167.0 132.9L169.0 132.8L171.0 133.3L173.0 133.1L175.0 132.7L177.0 133.1L179.0 132.9L181.0 132.9L183.0 132.9L185.0 132.8L187.0 132.7L189.0 132.9L191.0 132.9L193.0 133.3L195.0 132.8L197.0 133.3L199.0 132.8L201.0 132.9L203.0 133.0" stroke="#00e400" stroke-width="3.0" fill="none"/>
<path d="M615.0 128.8L617.0 129.6L619.0 130.2L621.0 130.7L623.5 131.9L626.0 132.7L628.5 133.9L630.5 133.4L632.5 133.5L634.5 133.8L636.6 133.3L638.6 133.5L640.6 133.8L642.6 133.8L644.6 133.3L646.6 133.3L648.6 133.3L650.6 133.9L652.7 133.5L654.7 133.7L656.7 133.8L658.7 133.5L660.7 133.5L662.7 133.9L664.7 133.7L666.7 133.5L668.8 133.7L670.8 133.5L672.8 133.5L674.8 133.3L676.8 133.8L678.8 133.8L680.8 133.7L682.8 133.9L684.9 133.3L686.9 133.4L688.9 133.6L690.9 133.9L692.9 133.9L694.9 133.5L696.9 133.5L698.9 133.6L701.0 133.6L703.0 133.9L705.0 133.4L707.0 133.8L709.0 133.7L711.0 133.8L713.0 133.8L715.0 133.7L717.1 133.5L719.1 133.5L721.1 133.5L723.1 133.8L725.1 133.3L727.1 133.4L729.1 133.8L731.1 133.4L733.2 133.3L735.2 133.3L737.2 133.6L739.2 133.5L741.2 133.9L743.2 133.8L745.2 133.9L747.2 133.5L749.3 133.4L751.3 133.4L753.3 133.6L755.3 133.7L757.3 133.6L759.3 133.4L761.3 133.6L763.3 133.7L765.4 133.7L767.4 133.7L769.4 133.8L771.4 133.7L773.4 133.4L775.4 133.8L777.4 133.5L779.4 133.6L781.5 133.5L783.5 133.7L785.5 133.4L787.5 133.4L789.5 133.4L791.5 133.4L793.5 133.8L795.5 133.6L797.6 133.5L799.6 133.5L801.6 133.9L803.6 133.6L805.6 133.4L807.6 133.8L809.6 133.7L811.6 133.9L813.7 133.4L815.7 133.6L817.7 133.8L819.7 133.8L821.7 133.8L823.7 133.3L825.7 133.5L827.7 133.4L829.8 133.4L831.8 133.9L833.8 133.6L835.8 133.9L837.8 133.5L839.8 133.8L841.8 133.6L843.8 133.5L845.9 133.8L847.9 133.9L849.9 133.4L851.9 133.7L853.9 133.7L855.9 133.4L857.9 133.5L859.9 133.4L862.0 133.4L864.0 133.5L866.0 133.7L868.0 133.6" stroke="#00e400" stroke-width="2.6" fill="none"/>
<path d="M203.0 247.5L203.0 180.0L203.9 179.4L204.8 179.2L205.7 179.6L206.6 180.0L207.5 179.4L208.4 179.6L209.3 179.4L210.2 180.2L211.1 179.9L212.0 179.3L212.9 181.4L213.8 189.0L214.7 189.2L215.6 189.3L216.5 188.3L217.4 188.4L218.3 189.3L219.2 188.7L220.1 188.4L221.0 188.4L221.9 189.5L222.8 188.3L223.7 188.7L224.6 188.3L225.5 188.3L226.4 189.1L227.3 189.3L228.2 188.1L229.1 187.7L230.0 188.6L230.9 187.6L231.8 184.7L232.7 183.7L233.6 182.4L234.5 182.7L235.4 181.6L236.3 182.0L237.2 180.9L238.1 180.3L239.0 179.9L239.9 180.8L240.8 180.9L241.7 181.3L242.6 179.7L243.5 180.6L244.4 180.1L245.3 180.2L246.2 179.7L247.1 179.8L248.0 180.0L248.9 180.4L249.8 179.3L250.7 179.8L251.6 180.2L252.5 180.4L253.4 179.4L254.3 179.4L255.2 180.3L256.1 180.4L257.0 179.8L257.9 179.3L258.8 180.3L259.7 179.7L260.6 180.3L261.5 179.9L262.4 180.2L263.3 179.4L264.2 180.1L265.1 179.5L266.0 179.7L266.9 180.2L267.8 180.2L268.7 179.4L269.6 179.5L270.5 179.7L271.4 179.8L272.3 179.7L273.2 179.3L274.1 179.5L275.0 180.1L275.9 180.3L276.8 179.2L277.7 179.9L278.6 180.1L279.5 179.2L280.4 180.2L281.3 179.3L282.2 179.9L283.1 179.9L284.0 180.0L284.9 179.6L285.8 179.7L286.7 179.9L287.6 179.7L288.5 180.0L289.4 179.7L290.3 179.7L291.2 179.2L292.1 179.9L293.0 179.8L293.9 179.5L294.8 180.1L295.7 180.1L296.6 179.7L297.5 179.4L298.4 179.8L299.3 179.3L300.2 179.4L301.1 179.7L302.0 179.3L302.9 179.7L303.8 179.8L304.7 179.2L305.6 180.0L306.5 179.3L307.4 180.1L308.3 180.1L309.2 179.8L310.1 179.3L311.0 179.8L311.9 179.7L312.8 180.3L313.7 179.4L314.6 180.2L315.5 180.4L316.4 180.1L317.3 180.2L318.2 179.4L319.1 180.4L320.0 179.8L320.9 180.3L321.8 180.3L322.7 179.4L323.6 180.1L324.5 180.3L325.4 179.3L326.3 179.6L327.2 180.1L328.1 179.4L329.0 180.3L329.9 179.5L330.8 180.2L331.7 179.4L332.6 179.8L333.5 180.3L334.4 179.4L335.3 179.5L336.2 179.8L337.1 179.6L338.0 179.2L338.9 179.4L339.8 179.4L340.7 180.3L341.6 180.0L342.5 180.3L343.4 179.4L344.3 180.1L345.2 179.3L346.1 179.8L347.0 180.0L347.9 179.6L348.8 180.2L349.7 179.9L350.6 179.9L351.5 180.3L352.4 179.3L353.3 180.4L354.2 180.0L355.1 179.7L356.0 180.2L356.9 179.5L357.8 180.4L358.7 179.9L359.6 179.6L360.5 180.1L361.4 179.7L362.3 179.4L363.2 180.1L364.1 179.3L365.0 180.2L365.9 179.5L366.8 180.0L367.7 180.4L368.6 179.9L369.5 180.0L370.4 179.6L371.3 179.2L372.2 179.2L373.1 179.4L374.0 179.9L374.9 179.7L375.8 179.8L376.7 180.3L377.6 179.4L378.5 179.5L379.4 180.0L380.3 179.2L381.2 179.2L382.1 179.6L383.0 179.3L383.9 179.6L384.8 179.5L385.7 179.9L386.6 179.9L387.5 179.4L388.4 179.9L389.3 179.8L390.2 179.4L391.1 180.3L392.0 179.5L392.9 179.4L393.8 179.3L394.7 180.0L395.6 180.2L396.5 180.1L397.4 179.7L398.3 179.5L399.2 179.2L400.1 180.0L401.0 179.9L401.9 179.6L402.8 180.0L403.7 179.7L404.6 180.3L405.5 180.1L406.4 179.5L407.3 180.3L408.2 179.3L409.1 179.8L410.0 179.7L410.9 179.5L411.8 179.3L412.7 180.1L413.6 179.2L414.5 179.9L415.4 180.3L416.3 179.4L417.2 179.4L418.1 179.9L419.0 179.8L419.9 180.0L420.8 180.2L421.7 179.4L422.6 179.6L423.5 179.6L424.4 179.3L425.3 180.3L426.2 180.1L427.1 180.1L428.0 179.2L428.9 180.2L429.8 180.1L430.7 179.8L431.6 180.1L432.5 179.7L433.4 179.5L434.3 179.3L435.2 179.5L436.1 179.2L437.0 179.6L437.9 180.1L438.8 180.0L439.7 180.2L440.6 180.1L441.5 179.5L442.4 179.9L443.3 179.7L444.2 180.1L445.1 179.8L446.0 179.5L446.9 180.0L447.8 180.4L448.7 179.5L449.6 180.3L450.5 179.2L451.4 179.5L452.3 179.5L453.2 180.1L454.1 180.3L455.0 180.1L455.9 179.6L456.8 180.3L457.7 179.6L458.6 179.5L459.5 180.3L460.4 180.0L461.3 180.0L462.2 180.0L463.1 180.4L464.0 179.8L464.9 180.2L465.8 180.0L466.7 180.2L467.6 179.7L468.5 180.1L469.4 179.9L470.3 179.6L471.2 179.5L472.1 179.9L473.0 179.3L473.9 180.3L474.8 179.4L475.7 179.2L476.6 179.3L477.5 180.3L478.4 179.6L479.3 179.4L480.2 179.2L481.1 179.2L482.0 180.0L482.9 180.0L483.8 180.0L484.7 180.1L485.6 179.3L486.5 179.9L487.4 179.6L488.3 180.2L489.2 180.2L490.1 180.3L491.0 179.3L491.9 180.2L492.8 180.3L493.7 180.3L494.6 179.3L495.5 179.4L496.4 179.3L497.3 179.2L498.2 180.2L499.1 180.2L500.0 180.0L500.9 180.2L501.8 180.0L502.7 179.5L503.6 179.3L504.5 179.3L505.4 180.1L506.3 179.4L507.2 179.6L508.1 179.7L509.0 179.2L509.9 179.5L510.8 179.5L511.7 180.1L512.6 179.6L513.5 179.6L514.4 180.4L515.3 179.8L516.2 180.2L517.1 179.9L518.0 179.2L518.9 179.7L519.8 179.7L520.7 180.1L521.6 179.6L522.5 180.0L523.4 179.8L524.3 179.5L525.2 180.2L526.1 179.3L527.0 180.2L527.9 179.4L528.8 179.2L529.7 179.4L530.6 180.1L531.5 180.4L532.4 179.2L533.3 179.8L534.2 179.8L535.1 180.2L536.0 179.4L536.9 179.8L537.8 179.6L538.7 180.2L539.6 179.5L540.5 180.3L541.4 179.5L542.3 179.5L543.2 180.0L544.1 179.8L545.0 179.3L545.9 180.0L546.8 179.3L547.7 180.1L548.6 180.0L549.5 180.1L550.4 180.0L551.3 179.6L552.2 179.7L553.1 179.7L554.0 180.3L554.9 179.3L555.8 180.3L556.7 179.2L557.6 179.4L558.5 179.5L559.4 180.3L560.3 179.8L561.2 179.7L562.1 180.3L563.0 179.5L563.9 179.8L564.8 179.8L565.7 180.1L566.6 180.1L567.5 180.0L568.4 179.6L569.3 179.6L570.2 179.4L571.1 180.2L572.0 180.0L572.9 180.1L573.8 179.4L574.7 179.7L575.6 180.1L576.5 179.9L577.4 179.4L578.3 179.8L579.2 180.3L580.1 179.5L581.0 179.4L581.9 179.6L582.8 180.0L583.7 180.2L584.6 179.4L585.5 179.4L586.4 179.5L587.3 179.6L588.2 179.8L589.1 179.4L590.0 179.6L590.9 179.4L591.8 180.4L592.7 180.1L593.6 179.3L594.5 180.4L595.4 179.3L596.3 179.7L597.2 180.4L598.1 180.2L599.0 180.1L599.9 179.7L600.8 179.4L601.7 180.0L602.6 179.3L603.5 179.4L604.4 179.7L605.3 179.2L606.2 179.7L607.1 180.1L608.0 180.0L608.9 179.8L609.8 180.0L610.7 179.8L611.6 179.4L612.5 179.9L613.4 179.7L614.3 180.1L615.0 247.5Z" fill="#00c0c4"/>
<rect x="203" y="247" width="11" height="3.5" fill="#40d8d8"/>
<rect x="613.4" y="179.6" width="1.6" height="67" fill="#00dcdc"/>
<path d="M203.0 246.2L205.0 246.0L207.0 246.0L209.0 246.1L211.0 246.0L213.0 245.9L215.0 246.1L217.0 246.2L219.0 246.1L221.0 246.1L223.0 246.2L225.0 246.1L227.0 246.1L229.0 246.0L231.0 245.9L233.0 246.1L235.0 245.8L237.0 246.0L239.0 246.1L241.0 246.1L243.0 246.1L245.0 245.9L247.0 246.0L249.0 246.0L251.0 246.1L253.0 246.0L255.0 246.1L257.0 246.2L259.0 245.8L261.0 246.1L263.0 246.1L265.0 245.9L267.0 246.0L269.0 246.2L271.0 245.8L273.0 246.0L275.0 245.8L277.0 246.1L279.0 246.2L281.0 246.0L283.0 245.8L285.0 246.0L287.0 246.0L289.0 246.1L291.0 246.0L293.0 246.1L295.0 246.2L297.0 246.0L299.0 246.0L301.0 246.2L303.0 245.9L305.0 246.1L307.0 245.9L309.0 246.1L311.0 245.8L313.0 246.2L315.0 245.9L317.0 245.8L319.0 245.9L321.0 245.9L323.0 245.8L325.0 246.0L327.0 246.0L329.0 246.1L331.0 245.9L333.0 245.9L335.0 245.9L337.0 246.1L339.0 246.2L341.0 246.0L343.0 245.9L345.0 246.2L347.0 245.9L349.0 245.9L351.0 245.8L353.0 246.1L355.0 246.2L357.0 246.1L359.0 246.0L361.0 246.0L363.0 245.9L365.0 246.2L367.0 245.9L369.0 246.1L371.0 246.2L373.0 246.2L375.0 246.0L377.0 245.9L379.0 246.0L381.0 245.8L383.0 246.2L385.0 245.9L387.0 246.2L389.0 245.9L391.0 245.9L393.0 245.9L395.0 246.0L397.0 245.8L399.0 245.8L401.0 246.1L403.0 245.9L405.0 245.9L407.0 245.9L409.0 246.0L411.0 246.0L413.0 246.1L415.0 246.1L417.0 245.9L419.0 246.2L421.0 246.2L423.0 245.8L425.0 246.2L427.0 246.2L429.0 246.1L431.0 245.8L433.0 246.2L435.0 246.1L437.0 245.8L439.0 245.8L441.0 246.2L443.0 246.1L445.0 245.9L447.0 245.8L449.0 245.8L451.0 245.9L453.0 246.1L455.0 245.9L457.0 245.8L459.0 246.2L461.0 246.1L463.0 245.8L465.0 246.2L467.0 246.1L469.0 246.1L471.0 246.1L473.0 246.2L475.0 246.1L477.0 246.2L479.0 245.8L481.0 246.1L483.0 246.0L485.0 246.1L487.0 246.0L489.0 246.2L491.0 246.0L493.0 245.9L495.0 245.9L497.0 245.8L499.0 246.0L501.0 245.8L503.0 246.0L505.0 245.8L507.0 246.0L509.0 246.0L511.0 246.0L513.0 246.2L515.0 245.8L517.0 246.2L519.0 246.0L521.0 246.0L523.0 246.1L525.0 246.2L527.0 245.9L529.0 246.0L531.0 246.2L533.0 245.8L535.0 246.1L537.0 246.1L539.0 245.8L541.0 246.1L543.0 246.1L545.0 246.2L547.0 245.9L549.0 246.2L551.0 246.0L553.0 246.0L555.0 246.2L557.0 245.8L559.0 246.1L561.0 246.1L563.0 245.9L565.0 246.2L567.0 245.9L569.0 246.0L571.0 246.0L573.0 246.1L575.0 245.9L577.0 246.0L579.0 246.0L581.0 246.0L583.0 246.2L585.0 245.9L587.0 246.2L589.0 246.0L591.0 246.0L593.0 245.9L595.0 246.0L597.0 246.2L599.0 246.1L601.0 246.1L603.0 245.9L605.0 245.9L607.0 245.9L609.0 246.0L611.0 246.1L613.0 246.1L615.0 246.0" stroke="#00ecec" stroke-width="3" fill="none"/>
<path d="M25.0 245.6L27.0 245.9L29.0 246.0L31.0 245.8L33.0 245.6L35.0 245.7L37.0 245.6L39.0 245.6L41.0 246.0L43.0 245.9L45.0 245.9L47.0 245.9L49.0 246.0L51.0 245.9L53.0 245.9L55.0 245.9L57.0 245.9L59.0 245.8L61.0 245.9L63.0 245.7L65.0 245.9L67.0 245.8L69.0 245.9L71.0 245.6L73.0 245.6L75.0 245.6L77.0 245.9L79.0 246.0L81.0 245.9L83.0 245.7L85.0 246.0L87.0 245.9L89.0 245.8L91.0 245.7L93.0 245.7L95.0 245.8L97.0 245.7L99.0 245.8L101.0 245.9L103.0 246.0L105.0 245.6L107.0 245.8L109.0 245.6L111.0 245.6L113.0 246.0L115.0 245.8L117.0 246.0L119.0 245.8L121.0 245.6L123.0 245.7L125.0 245.8L127.0 246.0L129.0 246.0L131.0 245.8L133.0 245.8L135.0 245.6L137.0 245.9L139.0 245.7L141.0 245.6L143.0 245.6L145.0 245.6L147.0 245.9L149.0 245.6L151.0 246.0L153.0 245.6L155.0 246.0L157.0 245.6L159.0 245.6L161.0 245.9L163.0 245.7L165.0 245.9L167.0 245.6L169.0 245.6L171.0 245.9L173.0 245.9L175.0 246.0L177.0 245.9L179.0 245.6L181.0 245.9L183.0 245.9L185.0 245.8L187.0 246.0L189.0 245.7L191.0 246.0L193.0 245.9L195.0 245.6L197.0 245.6L199.0 245.9L201.0 246.0L203.0 245.8" stroke="#00ecec" stroke-width="2.8" fill="none"/>
<path d="M615.0 240.2L617.0 241.2L619.0 242.2L621.0 242.9L623.0 244.1L625.0 244.9L627.0 245.6L629.0 245.7L631.0 245.8L633.0 245.8L635.0 245.9L637.0 245.7L639.0 245.9L641.1 245.7L643.1 245.9L645.1 245.9L647.1 245.8L649.1 245.8L651.1 245.9L653.1 246.0L655.1 245.9L657.1 245.8L659.1 245.7L661.1 245.6L663.1 246.0L665.2 245.9L667.2 245.9L669.2 245.7L671.2 245.8L673.2 246.0L675.2 245.9L677.2 245.8L679.2 245.7L681.2 245.8L683.2 246.0L685.2 245.8L687.2 245.9L689.3 245.8L691.3 246.0L693.3 245.9L695.3 245.7L697.3 245.6L699.3 245.7L701.3 245.8L703.3 245.8L705.3 245.9L707.3 246.0L709.3 245.6L711.4 245.9L713.4 245.9L715.4 245.9L717.4 245.8L719.4 245.7L721.4 245.9L723.4 245.9L725.4 245.9L727.4 246.0L729.4 245.7L731.4 245.6L733.4 245.8L735.5 245.9L737.5 245.7L739.5 245.9L741.5 246.0L743.5 245.7L745.5 245.8L747.5 245.9L749.5 245.8L751.5 245.7L753.5 245.7L755.5 245.9L757.5 245.9L759.5 245.8L761.6 245.6L763.6 245.9L765.6 245.9L767.6 245.7L769.6 245.8L771.6 246.0L773.6 246.0L775.6 245.8L777.6 245.8L779.6 245.8L781.6 245.7L783.6 245.7L785.7 245.7L787.7 245.9L789.7 245.7L791.7 245.8L793.7 245.8L795.7 245.8L797.7 245.7L799.7 245.6L801.7 246.0L803.7 245.7L805.7 245.6L807.8 245.9L809.8 245.9L811.8 245.7L813.8 245.8L815.8 245.7L817.8 245.8L819.8 245.6L821.8 245.6L823.8 246.0L825.8 245.9L827.8 245.8L829.8 245.8L831.9 245.7L833.9 245.9L835.9 245.8L837.9 246.0L839.9 245.9L841.9 245.9L843.9 246.0L845.9 245.7L847.9 245.6L849.9 245.7L851.9 245.7L853.9 245.6L856.0 245.6L858.0 245.8L860.0 245.9L862.0 245.8L864.0 246.0L866.0 246.0L868.0 245.8" stroke="#00ecec" stroke-width="2.6" fill="none"/>
<path d="M30.54 84.3h1.1M47.63 84.3h1.1M64.71 84.3h1.1M81.80 84.3h1.1M98.89 84.3h1.1M115.98 84.3h1.1M133.07 84.3h1.1M150.15 84.3h1.1M167.24 84.3h1.1M184.33 84.3h1.1M201.42 84.3h1.1M218.51 84.3h1.1M235.59 84.3h1.1M252.68 84.3h1.1M269.77 84.3h1.1M286.86 84.3h1.1M303.95 84.3h1.1M321.03 84.3h1.1M338.12 84.3h1.1M355.21 84.3h1.1M372.30 84.3h1.1M389.39 84.3h1.1M406.47 84.3h1.1M423.56 84.3h1.1M440.65 84.3h1.1M457.74 84.3h1.1M474.83 84.3h1.1M491.91 84.3h1.1M509.00 84.3h1.1M526.09 84.3h1.1M543.18 84.3h1.1M560.27 84.3h1.1M577.35 84.3h1.1M594.44 84.3h1.1M611.53 84.3h1.1M628.62 84.3h1.1M645.71 84.3h1.1M662.79 84.3h1.1M679.88 84.3h1.1M696.97 84.3h1.1M714.06 84.3h1.1M731.15 84.3h1.1M748.23 84.3h1.1M765.32 84.3h1.1M782.41 84.3h1.1M799.50 84.3h1.1M816.59 84.3h1.1M833.67 84.3h1.1M850.76 84.3h1.1M30.54 138.1h1.1M47.63 138.1h1.1M64.71 138.1h1.1M81.80 138.1h1.1M98.89 138.1h1.1M115.98 138.1h1.1M133.07 138.1h1.1M150.15 138.1h1.1M167.24 138.1h1.1M184.33 138.1h1.1M201.42 138.1h1.1M218.51 138.1h1.1M235.59 138.1h1.1M252.68 138.1h1.1M269.77 138.1h1.1M286.86 138.1h1.1M303.95 138.1h1.1M321.03 138.1h1.1M338.12 138.1h1.1M355.21 138.1h1.1M372.30 138.1h1.1M389.39 138.1h1.1M406.47 138.1h1.1M423.56 138.1h1.1M440.65 138.1h1.1M457.74 138.1h1.1M474.83 138.1h1.1M491.91 138.1h1.1M509.00 138.1h1.1M526.09 138.1h1.1M543.18 138.1h1.1M560.27 138.1h1.1M577.35 138.1h1.1M594.44 138.1h1.1M611.53 138.1h1.1M628.62 138.1h1.1M645.71 138.1h1.1M662.79 138.1h1.1M679.88 138.1h1.1M696.97 138.1h1.1M714.06 138.1h1.1M731.15 138.1h1.1M748.23 138.1h1.1M765.32 138.1h1.1M782.41 138.1h1.1M799.50 138.1h1.1M816.59 138.1h1.1M833.67 138.1h1.1M850.76 138.1h1.1M30.54 191.9h1.1M47.63 191.9h1.1M64.71 191.9h1.1M81.80 191.9h1.1M98.89 191.9h1.1M115.98 191.9h1.1M133.07 191.9h1.1M150.15 191.9h1.1M167.24 191.9h1.1M184.33 191.9h1.1M201.42 191.9h1.1M218.51 191.9h1.1M235.59 191.9h1.1M252.68 191.9h1.1M269.77 191.9h1.1M286.86 191.9h1.1M303.95 191.9h1.1M321.03 191.9h1.1M338.12 191.9h1.1M355.21 191.9h1.1M372.30 191.9h1.1M389.39 191.9h1.1M406.47 191.9h1.1M423.56 191.9h1.1M440.65 191.9h1.1M457.74 191.9h1.1M474.83 191.9h1.1M491.91 191.9h1.1M509.00 191.9h1.1M526.09 191.9h1.1M543.18 191.9h1.1M560.27 191.9h1.1M577.35 191.9h1.1M594.44 191.9h1.1M611.53 191.9h1.1M628.62 191.9h1.1M645.71 191.9h1.1M662.79 191.9h1.1M679.88 191.9h1.1M696.97 191.9h1.1M714.06 191.9h1.1M731.15 191.9h1.1M748.23 191.9h1.1M765.32 191.9h1.1M782.41 191.9h1.1M799.50 191.9h1.1M816.59 191.9h1.1M833.67 191.9h1.1M850.76 191.9h1.1M30.54 245.8h1.1M47.63 245.8h1.1M64.71 245.8h1.1M81.80 245.8h1.1M98.89 245.8h1.1M115.98 245.8h1.1M133.07 245.8h1.1M150.15 245.8h1.1M167.24 245.8h1.1M184.33 245.8h1.1M201.42 245.8h1.1M218.51 245.8h1.1M235.59 245.8h1.1M252.68 245.8h1.1M269.77 245.8h1.1M286.86 245.8h1.1M303.95 245.8h1.1M321.03 245.8h1.1M338.12 245.8h1.1M355.21 245.8h1.1M372.30 245.8h1.1M389.39 245.8h1.1M406.47 245.8h1.1M423.56 245.8h1.1M440.65 245.8h1.1M457.74 245.8h1.1M474.83 245.8h1.1M491.91 245.8h1.1M509.00 245.8h1.1M526.09 245.8h1.1M543.18 245.8h1.1M560.27 245.8h1.1M577.35 245.8h1.1M594.44 245.8h1.1M611.53 245.8h1.1M628.62 245.8h1.1M645.71 245.8h1.1M662.79 245.8h1.1M679.88 245.8h1.1M696.97 245.8h1.1M714.06 245.8h1.1M731.15 245.8h1.1M748.23 245.8h1.1M765.32 245.8h1.1M782.41 245.8h1.1M799.50 245.8h1.1M816.59 245.8h1.1M833.67 245.8h1.1M850.76 245.8h1.1M30.54 353.4h1.1M47.63 353.4h1.1M64.71 353.4h1.1M81.80 353.4h1.1M98.89 353.4h1.1M115.98 353.4h1.1M133.07 353.4h1.1M150.15 353.4h1.1M167.24 353.4h1.1M184.33 353.4h1.1M201.42 353.4h1.1M218.51 353.4h1.1M235.59 353.4h1.1M252.68 353.4h1.1M269.77 353.4h1.1M286.86 353.4h1.1M303.95 353.4h1.1M321.03 353.4h1.1M338.12 353.4h1.1M355.21 353.4h1.1M372.30 353.4h1.1M389.39 353.4h1.1M406.47 353.4h1.1M423.56 353.4h1.1M440.65 353.4h1.1M457.74 353.4h1.1M474.83 353.4h1.1M491.91 353.4h1.1M509.00 353.4h1.1M526.09 353.4h1.1M543.18 353.4h1.1M560.27 353.4h1.1M577.35 353.4h1.1M594.44 353.4h1.1M611.53 353.4h1.1M628.62 353.4h1.1M645.71 353.4h1.1M662.79 353.4h1.1M679.88 353.4h1.1M696.97 353.4h1.1M714.06 353.4h1.1M731.15 353.4h1.1M748.23 353.4h1.1M765.32 353.4h1.1M782.41 353.4h1.1M799.50 353.4h1.1M816.59 353.4h1.1M833.67 353.4h1.1M850.76 353.4h1.1M30.54 407.2h1.1M47.63 407.2h1.1M64.71 407.2h1.1M81.80 407.2h1.1M98.89 407.2h1.1M115.98 407.2h1.1M133.07 407.2h1.1M150.15 407.2h1.1M167.24 407.2h1.1M184.33 407.2h1.1M201.42 407.2h1.1M218.51 407.2h1.1M235.59 407.2h1.1M252.68 407.2h1.1M269.77 407.2h1.1M286.86 407.2h1.1M303.95 407.2h1.1M321.03 407.2h1.1M338.12 407.2h1.1M355.21 407.2h1.1M372.30 407.2h1.1M389.39 407.2h1.1M406.47 407.2h1.1M423.56 407.2h1.1M440.65 407.2h1.1M457.74 407.2h1.1M474.83 407.2h1.1M491.91 407.2h1.1M509.00 407.2h1.1M526.09 407.2h1.1M543.18 407.2h1.1M560.27 407.2h1.1M577.35 407.2h1.1M594.44 407.2h1.1M611.53 407.2h1.1M628.62 407.2h1.1M645.71 407.2h1.1M662.79 407.2h1.1M679.88 407.2h1.1M696.97 407.2h1.1M714.06 407.2h1.1M731.15 407.2h1.1M748.23 407.2h1.1M765.32 407.2h1.1M782.41 407.2h1.1M799.50 407.2h1.1M816.59 407.2h1.1M833.67 407.2h1.1M850.76 407.2h1.1M30.54 461.1h1.1M47.63 461.1h1.1M64.71 461.1h1.1M81.80 461.1h1.1M98.89 461.1h1.1M115.98 461.1h1.1M133.07 461.1h1.1M150.15 461.1h1.1M167.24 461.1h1.1M184.33 461.1h1.1M201.42 461.1h1.1M218.51 461.1h1.1M235.59 461.1h1.1M252.68 461.1h1.1M269.77 461.1h1.1M286.86 461.1h1.1M303.95 461.1h1.1M321.03 461.1h1.1M338.12 461.1h1.1M355.21 461.1h1.1M372.30 461.1h1.1M389.39 461.1h1.1M406.47 461.1h1.1M423.56 461.1h1.1M440.65 461.1h1.1M457.74 461.1h1.1M474.83 461.1h1.1M491.91 461.1h1.1M509.00 461.1h1.1M526.09 461.1h1.1M543.18 461.1h1.1M560.27 461.1h1.1M577.35 461.1h1.1M594.44 461.1h1.1M611.53 461.1h1.1M628.62 461.1h1.1M645.71 461.1h1.1M662.79 461.1h1.1M679.88 461.1h1.1M696.97 461.1h1.1M714.06 461.1h1.1M731.15 461.1h1.1M748.23 461.1h1.1M765.32 461.1h1.1M782.41 461.1h1.1M799.50 461.1h1.1M816.59 461.1h1.1M833.67 461.1h1.1M850.76 461.1h1.1M30.54 514.9h1.1M47.63 514.9h1.1M64.71 514.9h1.1M81.80 514.9h1.1M98.89 514.9h1.1M115.98 514.9h1.1M133.07 514.9h1.1M150.15 514.9h1.1M167.24 514.9h1.1M184.33 514.9h1.1M201.42 514.9h1.1M218.51 514.9h1.1M235.59 514.9h1.1M252.68 514.9h1.1M269.77 514.9h1.1M286.86 514.9h1.1M303.95 514.9h1.1M321.03 514.9h1.1M338.12 514.9h1.1M355.21 514.9h1.1M372.30 514.9h1.1M389.39 514.9h1.1M406.47 514.9h1.1M423.56 514.9h1.1M440.65 514.9h1.1M457.74 514.9h1.1M474.83 514.9h1.1M491.91 514.9h1.1M509.00 514.9h1.1M526.09 514.9h1.1M543.18 514.9h1.1M560.27 514.9h1.1M577.35 514.9h1.1M594.44 514.9h1.1M611.53 514.9h1.1M628.62 514.9h1.1M645.71 514.9h1.1M662.79 514.9h1.1M679.88 514.9h1.1M696.97 514.9h1.1M714.06 514.9h1.1M731.15 514.9h1.1M748.23 514.9h1.1M765.32 514.9h1.1M782.41 514.9h1.1M799.50 514.9h1.1M816.59 514.9h1.1M833.67 514.9h1.1M850.76 514.9h1.1M98.89 41.2h1.1M98.89 52.0h1.1M98.89 62.7h1.1M98.89 73.5h1.1M98.89 84.3h1.1M98.89 95.0h1.1M98.89 105.8h1.1M98.89 116.6h1.1M98.89 127.3h1.1M98.89 138.1h1.1M98.89 148.9h1.1M98.89 159.6h1.1M98.89 170.4h1.1M98.89 181.2h1.1M98.89 191.9h1.1M98.89 202.7h1.1M98.89 213.5h1.1M98.89 224.2h1.1M98.89 235.0h1.1M98.89 245.8h1.1M98.89 256.5h1.1M98.89 267.3h1.1M98.89 278.0h1.1M98.89 288.8h1.1M98.89 299.6h1.1M98.89 310.3h1.1M98.89 321.1h1.1M98.89 331.9h1.1M98.89 342.6h1.1M98.89 353.4h1.1M98.89 364.2h1.1M98.89 374.9h1.1M98.89 385.7h1.1M98.89 396.5h1.1M98.89 407.2h1.1M98.89 418.0h1.1M98.89 428.8h1.1M98.89 439.5h1.1M98.89 450.3h1.1M98.89 461.1h1.1M98.89 471.8h1.1M98.89 482.6h1.1M98.89 493.3h1.1M98.89 504.1h1.1M98.89 514.9h1.1M98.89 525.6h1.1M98.89 536.4h1.1M98.89 547.2h1.1M98.89 557.9h1.1M184.33 41.2h1.1M184.33 52.0h1.1M184.33 62.7h1.1M184.33 73.5h1.1M184.33 84.3h1.1M184.33 95.0h1.1M184.33 105.8h1.1M184.33 116.6h1.1M184.33 127.3h1.1M184.33 138.1h1.1M184.33 148.9h1.1M184.33 159.6h1.1M184.33 170.4h1.1M184.33 181.2h1.1M184.33 191.9h1.1M184.33 202.7h1.1M184.33 213.5h1.1M184.33 224.2h1.1M184.33 235.0h1.1M184.33 245.8h1.1M184.33 256.5h1.1M184.33 267.3h1.1M184.33 278.0h1.1M184.33 288.8h1.1M184.33 299.6h1.1M184.33 310.3h1.1M184.33 321.1h1.1M184.33 331.9h1.1M184.33 342.6h1.1M184.33 353.4h1.1M184.33 364.2h1.1M184.33 374.9h1.1M184.33 385.7h1.1M184.33 396.5h1.1M184.33 407.2h1.1M184.33 418.0h1.1M184.33 428.8h1.1M184.33 439.5h1.1M184.33 450.3h1.1M184.33 461.1h1.1M184.33 471.8h1.1M184.33 482.6h1.1M184.33 493.3h1.1M184.33 504.1h1.1M184.33 514.9h1.1M184.33 525.6h1.1M184.33 536.4h1.1M184.33 547.2h1.1M184.33 557.9h1.1M269.77 41.2h1.1M269.77 52.0h1.1M269.77 62.7h1.1M269.77 73.5h1.1M269.77 84.3h1.1M269.77 95.0h1.1M269.77 105.8h1.1M269.77 116.6h1.1M269.77 127.3h1.1M269.77 138.1h1.1M269.77 148.9h1.1M269.77 159.6h1.1M269.77 170.4h1.1M269.77 181.2h1.1M269.77 191.9h1.1M269.77 202.7h1.1M269.77 213.5h1.1M269.77 224.2h1.1M269.77 235.0h1.1M269.77 245.8h1.1M269.77 256.5h1.1M269.77 267.3h1.1M269.77 278.0h1.1M269.77 288.8h1.1M269.77 299.6h1.1M269.77 310.3h1.1M269.77 321.1h1.1M269.77 331.9h1.1M269.77 342.6h1.1M269.77 353.4h1.1M269.77 364.2h1.1M269.77 374.9h1.1M269.77 385.7h1.1M269.77 396.5h1.1M269.77 407.2h1.1M269.77 418.0h1.1M269.77 428.8h1.1M269.77 439.5h1.1M269.77 450.3h1.1M269.77 461.1h1.1M269.77 471.8h1.1M269.77 482.6h1.1M269.77 493.3h1.1M269.77 504.1h1.1M269.77 514.9h1.1M269.77 525.6h1.1M269.77 536.4h1.1M269.77 547.2h1.1M269.77 557.9h1.1M355.21 41.2h1.1M355.21 52.0h1.1M355.21 62.7h1.1M355.21 73.5h1.1M355.21 84.3h1.1M355.21 95.0h1.1M355.21 105.8h1.1M355.21 116.6h1.1M355.21 127.3h1.1M355.21 138.1h1.1M355.21 148.9h1.1M355.21 159.6h1.1M355.21 170.4h1.1M355.21 181.2h1.1M355.21 191.9h1.1M355.21 202.7h1.1M355.21 213.5h1.1M355.21 224.2h1.1M355.21 235.0h1.1M355.21 245.8h1.1M355.21 256.5h1.1M355.21 267.3h1.1M355.21 278.0h1.1M355.21 288.8h1.1M355.21 299.6h1.1M355.21 310.3h1.1M355.21 321.1h1.1M355.21 331.9h1.1M355.21 342.6h1.1M355.21 353.4h1.1M355.21 364.2h1.1M355.21 374.9h1.1M355.21 385.7h1.1M355.21 396.5h1.1M355.21 407.2h1.1M355.21 418.0h1.1M355.21 428.8h1.1M355.21 439.5h1.1M355.21 450.3h1.1M355.21 461.1h1.1M355.21 471.8h1.1M355.21 482.6h1.1M355.21 493.3h1.1M355.21 504.1h1.1M355.21 514.9h1.1M355.21 525.6h1.1M355.21 536.4h1.1M355.21 547.2h1.1M355.21 557.9h1.1M526.09 41.2h1.1M526.09 52.0h1.1M526.09 62.7h1.1M526.09 73.5h1.1M526.09 84.3h1.1M526.09 95.0h1.1M526.09 105.8h1.1M526.09 116.6h1.1M526.09 127.3h1.1M526.09 138.1h1.1M526.09 148.9h1.1M526.09 159.6h1.1M526.09 170.4h1.1M526.09 181.2h1.1M526.09 191.9h1.1M526.09 202.7h1.1M526.09 213.5h1.1M526.09 224.2h1.1M526.09 235.0h1.1M526.09 245.8h1.1M526.09 256.5h1.1M526.09 267.3h1.1M526.09 278.0h1.1M526.09 288.8h1.1M526.09 299.6h1.1M526.09 310.3h1.1M526.09 321.1h1.1M526.09 331.9h1.1M526.09 342.6h1.1M526.09 353.4h1.1M526.09 364.2h1.1M526.09 374.9h1.1M526.09 385.7h1.1M526.09 396.5h1.1M526.09 407.2h1.1M526.09 418.0h1.1M526.09 428.8h1.1M526.09 439.5h1.1M526.09 450.3h1.1M526.09 461.1h1.1M526.09 471.8h1.1M526.09 482.6h1.1M526.09 493.3h1.1M526.09 504.1h1.1M526.09 514.9h1.1M526.09 525.6h1.1M526.09 536.4h1.1M526.09 547.2h1.1M526.09 557.9h1.1M611.53 41.2h1.1M611.53 52.0h1.1M611.53 62.7h1.1M611.53 73.5h1.1M611.53 84.3h1.1M611.53 95.0h1.1M611.53 105.8h1.1M611.53 116.6h1.1M611.53 127.3h1.1M611.53 138.1h1.1M611.53 148.9h1.1M611.53 159.6h1.1M611.53 170.4h1.1M611.53 181.2h1.1M611.53 191.9h1.1M611.53 202.7h1.1M611.53 213.5h1.1M611.53 224.2h1.1M611.53 235.0h1.1M611.53 245.8h1.1M611.53 256.5h1.1M611.53 267.3h1.1M611.53 278.0h1.1M611.53 288.8h1.1M611.53 299.6h1.1M611.53 310.3h1.1M611.53 321.1h1.1M611.53 331.9h1.1M611.53 342.6h1.1M611.53 353.4h1.1M611.53 364.2h1.1M611.53 374.9h1.1M611.53 385.7h1.1M611.53 396.5h1.1M611.53 407.2h1.1M611.53 418.0h1.1M611.53 428.8h1.1M611.53 439.5h1.1M611.53 450.3h1.1M611.53 461.1h1.1M611.53 471.8h1.1M611.53 482.6h1.1M611.53 493.3h1.1M611.53 504.1h1.1M611.53 514.9h1.1M611.53 525.6h1.1M611.53 536.4h1.1M611.53 547.2h1.1M611.53 557.9h1.1M696.97 41.2h1.1M696.97 52.0h1.1M696.97 62.7h1.1M696.97 73.5h1.1M696.97 84.3h1.1M696.97 95.0h1.1M696.97 105.8h1.1M696.97 116.6h1.1M696.97 127.3h1.1M696.97 138.1h1.1M696.97 148.9h1.1M696.97 159.6h1.1M696.97 170.4h1.1M696.97 181.2h1.1M696.97 191.9h1.1M696.97 202.7h1.1M696.97 213.5h1.1M696.97 224.2h1.1M696.97 235.0h1.1M696.97 245.8h1.1M696.97 256.5h1.1M696.97 267.3h1.1M696.97 278.0h1.1M696.97 288.8h1.1M696.97 299.6h1.1M696.97 310.3h1.1M696.97 321.1h1.1M696.97 331.9h1.1M696.97 342.6h1.1M696.97 353.4h1.1M696.97 364.2h1.1M696.97 374.9h1.1M696.97 385.7h1.1M696.97 396.5h1.1M696.97 407.2h1.1M696.97 418.0h1.1M696.97 428.8h1.1M696.97 439.5h1.1M696.97 450.3h1.1M696.97 461.1h1.1M696.97 471.8h1.1M696.97 482.6h1.1M696.97 493.3h1.1M696.97 504.1h1.1M696.97 514.9h1.1M696.97 525.6h1.1M696.97 536.4h1.1M696.97 547.2h1.1M696.97 557.9h1.1M782.41 41.2h1.1M782.41 52.0h1.1M782.41 62.7h1.1M782.41 73.5h1.1M782.41 84.3h1.1M782.41 95.0h1.1M782.41 105.8h1.1M782.41 116.6h1.1M782.41 127.3h1.1M782.41 138.1h1.1M782.41 148.9h1.1M782.41 159.6h1.1M782.41 170.4h1.1M782.41 181.2h1.1M782.41 191.9h1.1M782.41 202.7h1.1M782.41 213.5h1.1M782.41 224.2h1.1M782.41 235.0h1.1M782.41 245.8h1.1M782.41 256.5h1.1M782.41 267.3h1.1M782.41 278.0h1.1M782.41 288.8h1.1M782.41 299.6h1.1M782.41 310.3h1.1M782.41 321.1h1.1M782.41 331.9h1.1M782.41 342.6h1.1M782.41 353.4h1.1M782.41 364.2h1.1M782.41 374.9h1.1M782.41 385.7h1.1M782.41 396.5h1.1M782.41 407.2h1.1M782.41 418.0h1.1M782.41 428.8h1.1M782.41 439.5h1.1M782.41 450.3h1.1M782.41 461.1h1.1M782.41 471.8h1.1M782.41 482.6h1.1M782.41 493.3h1.1M782.41 504.1h1.1M782.41 514.9h1.1M782.41 525.6h1.1M782.41 536.4h1.1M782.41 547.2h1.1M782.41 557.9h1.1" stroke="#766c54" stroke-width="1" fill="none"/>
<path d="M14.0 299.6H868.4M441.2 30.45V568.7M31.1 297.1v5M48.2 297.1v5M65.3 297.1v5M82.4 297.1v5M99.4 297.1v5M116.5 297.1v5M133.6 297.1v5M150.7 297.1v5M167.8 297.1v5M184.9 297.1v5M202.0 297.1v5M219.1 297.1v5M236.1 297.1v5M253.2 297.1v5M270.3 297.1v5M287.4 297.1v5M304.5 297.1v5M321.6 297.1v5M338.7 297.1v5M355.8 297.1v5M372.8 297.1v5M389.9 297.1v5M407.0 297.1v5M424.1 297.1v5M441.2 297.1v5M458.3 297.1v5M475.4 297.1v5M492.5 297.1v5M509.6 297.1v5M526.6 297.1v5M543.7 297.1v5M560.8 297.1v5M577.9 297.1v5M595.0 297.1v5M612.1 297.1v5M629.2 297.1v5M646.3 297.1v5M663.3 297.1v5M680.4 297.1v5M697.5 297.1v5M714.6 297.1v5M731.7 297.1v5M748.8 297.1v5M765.9 297.1v5M783.0 297.1v5M800.0 297.1v5M817.1 297.1v5M834.2 297.1v5M851.3 297.1v5M438.2 41.2h6M438.2 52.0h6M438.2 62.7h6M438.2 73.5h6M436.7 84.3h9.0M438.2 95.0h6M438.2 105.8h6M438.2 116.6h6M438.2 127.3h6M436.7 138.1h9.0M438.2 148.9h6M438.2 159.6h6M438.2 170.4h6M438.2 181.2h6M436.7 191.9h9.0M438.2 202.7h6M438.2 213.5h6M438.2 224.2h6M438.2 235.0h6M436.7 245.8h9.0M438.2 256.5h6M438.2 267.3h6M438.2 278.0h6M438.2 288.8h6M436.7 299.6h9.0M438.2 310.3h6M438.2 321.1h6M438.2 331.9h6M438.2 342.6h6M436.7 353.4h9.0M438.2 364.2h6M438.2 374.9h6M438.2 385.7h6M438.2 396.5h6M436.7 407.2h9.0M438.2 418.0h6M438.2 428.8h6M438.2 439.5h6M438.2 450.3h6M436.7 461.1h9.0M438.2 471.8h6M438.2 482.6h6M438.2 493.3h6M438.2 504.1h6M436.7 514.9h9.0M438.2 525.6h6M438.2 536.4h6M438.2 547.2h6M438.2 557.9h6" stroke="#7c7058" stroke-width="1" fill="none"/>
<path d="M186.8 515.5V448.3M614.4 448.3V515.5" stroke="#800080" stroke-width="0.9" fill="none"/>
<path d="M25.0 515.3L27.0 515.7L29.0 515.5L31.1 515.4L33.1 515.9L35.1 515.5L37.1 515.6L39.2 515.7L41.2 515.9L43.2 515.7L45.2 515.5L47.2 515.6L49.3 515.4L51.3 515.9L53.3 515.9L55.3 515.4L57.4 515.3L59.4 515.5L61.4 515.5L63.4 515.8L65.5 515.8L67.5 515.8L69.5 515.3L71.5 515.8L73.5 515.7L75.6 515.7L77.6 515.9L79.6 515.3L81.6 515.4L83.7 515.8L85.7 515.9L87.7 515.7L89.7 515.5L91.7 515.7L93.8 515.8L95.8 515.4L97.8 515.5L99.8 515.5L101.9 515.4L103.9 515.6L105.9 515.4L107.9 515.4L109.9 515.4L112.0 515.7L114.0 515.3L116.0 515.7L118.0 515.4L120.1 515.3L122.1 515.9L124.1 515.4L126.1 515.9L128.1 515.8L130.2 515.8L132.2 515.4L134.2 515.6L136.2 515.4L138.3 515.9L140.3 515.8L142.3 515.7L144.3 515.6L146.4 515.5L148.4 515.8L150.4 515.6L152.4 515.7L154.4 515.4L156.5 515.4L158.5 515.3L160.5 515.7L162.5 515.6L164.6 515.4L166.6 515.8L168.6 515.5L170.6 515.5L172.6 515.4L174.7 515.5L176.7 515.8L178.7 515.5L180.7 515.4L182.8 515.6L184.8 515.5L186.8 515.6" stroke="#e800e8" stroke-width="2.4" fill="none"/>
<path d="M186.8 448.5L188.8 448.1L190.8 448.5L192.8 448.1L194.8 448.5L196.8 448.4L198.8 448.2L200.9 448.3L202.9 448.2L204.9 448.2L206.9 448.2L208.9 448.2L210.9 448.5L212.9 448.5L214.9 448.5L216.9 448.1L218.9 448.2L220.9 448.5L222.9 448.1L224.9 448.4L227.0 448.2L229.0 448.5L231.0 448.1L233.0 448.4L235.0 448.2L237.0 448.2L239.0 448.1L241.0 448.4L243.0 448.3L245.0 448.2L247.0 448.3L249.0 448.5L251.0 448.2L253.0 448.3L255.1 448.2L257.1 448.2L259.1 448.4L261.1 448.4L263.1 448.2L265.1 448.1L267.1 448.1L269.1 448.3L271.1 448.3L273.1 448.2L275.1 448.2L277.1 448.3L279.1 448.4L281.2 448.4L283.2 448.3L285.2 448.2L287.2 448.1L289.2 448.4L291.2 448.3L293.2 448.4L295.2 448.1L297.2 448.4L299.2 448.2L301.2 448.4L303.2 448.4L305.2 448.3L307.3 448.1L309.3 448.5L311.3 448.3L313.3 448.4L315.3 448.2L317.3 448.2L319.3 448.4L321.3 448.2L323.3 448.2L325.3 448.2L327.3 448.3L329.3 448.1L331.3 448.3L333.3 448.3L335.4 448.3L337.4 448.1L339.4 448.4L341.4 448.4L343.4 448.4L345.4 448.2L347.4 448.4L349.4 448.3L351.4 448.4L353.4 448.1L355.4 448.4L357.4 448.5L359.4 448.3L361.5 448.3L363.5 448.3L365.5 448.3L367.5 448.1L369.5 448.5L371.5 448.2L373.5 448.2L375.5 448.1L377.5 448.2L379.5 448.4L381.5 448.1L383.5 448.1L385.5 448.4L387.6 448.2L389.6 448.1L391.6 448.3L393.6 448.3L395.6 448.3L397.6 448.4L399.6 448.1L401.6 448.4L403.6 448.4L405.6 448.1L407.6 448.1L409.6 448.3L411.6 448.3L413.6 448.2L415.7 448.1L417.7 448.3L419.7 448.2L421.7 448.3L423.7 448.4L425.7 448.2L427.7 448.3L429.7 448.4L431.7 448.2L433.7 448.4L435.7 448.5L437.7 448.3L439.7 448.3L441.8 448.4L443.8 448.3L445.8 448.3L447.8 448.5L449.8 448.4L451.8 448.2L453.8 448.2L455.8 448.2L457.8 448.3L459.8 448.5L461.8 448.4L463.8 448.5L465.8 448.4L467.9 448.4L469.9 448.1L471.9 448.3L473.9 448.5L475.9 448.5L477.9 448.2L479.9 448.3L481.9 448.4L483.9 448.2L485.9 448.3L487.9 448.1L489.9 448.3L491.9 448.3L493.9 448.1L496.0 448.2L498.0 448.5L500.0 448.4L502.0 448.5L504.0 448.4L506.0 448.4L508.0 448.5L510.0 448.5L512.0 448.1L514.0 448.4L516.0 448.2L518.0 448.4L520.0 448.2L522.1 448.3L524.1 448.5L526.1 448.3L528.1 448.2L530.1 448.3L532.1 448.3L534.1 448.5L536.1 448.2L538.1 448.2L540.1 448.4L542.1 448.1L544.1 448.3L546.1 448.5L548.2 448.3L550.2 448.2L552.2 448.3L554.2 448.3L556.2 448.2L558.2 448.1L560.2 448.2L562.2 448.2L564.2 448.3L566.2 448.2L568.2 448.2L570.2 448.1L572.2 448.3L574.2 448.4L576.3 448.3L578.3 448.3L580.3 448.4L582.3 448.2L584.3 448.4L586.3 448.3L588.3 448.3L590.3 448.3L592.3 448.3L594.3 448.2L596.3 448.2L598.3 448.2L600.3 448.3L602.4 448.3L604.4 448.3L606.4 448.1L608.4 448.2L610.4 448.4L612.4 448.2L614.4 448.3" stroke="#e800e8" stroke-width="2.6" fill="none"/>
<path d="M614.4 515.6L616.4 515.6L618.4 515.5L620.4 515.9L622.5 515.5L624.5 515.8L626.5 515.4L628.5 515.3L630.5 515.8L632.5 515.6L634.5 515.3L636.5 515.5L638.6 515.6L640.6 515.7L642.6 515.4L644.6 515.4L646.6 515.9L648.6 515.7L650.6 515.4L652.6 515.5L654.7 515.5L656.7 515.7L658.7 515.7L660.7 515.8L662.7 515.8L664.7 515.6L666.7 515.7L668.7 515.7L670.8 515.8L672.8 515.6L674.8 515.8L676.8 515.7L678.8 515.8L680.8 515.4L682.8 515.8L684.8 515.3L686.9 515.8L688.9 515.7L690.9 515.6L692.9 515.9L694.9 515.6L696.9 515.6L698.9 515.8L700.9 515.8L703.0 515.7L705.0 515.5L707.0 515.6L709.0 515.6L711.0 515.7L713.0 515.5L715.0 515.5L717.0 515.6L719.1 515.5L721.1 515.5L723.1 515.8L725.1 515.8L727.1 515.6L729.1 515.6L731.1 515.4L733.1 515.5L735.2 515.4L737.2 515.6L739.2 515.6L741.2 515.4L743.2 515.9L745.2 515.5L747.2 515.8L749.3 515.8L751.3 515.9L753.3 515.4L755.3 515.6L757.3 515.8L759.3 515.3L761.3 515.3L763.3 515.6L765.4 515.6L767.4 515.9L769.4 515.8L771.4 515.6L773.4 515.9L775.4 515.6L777.4 515.6L779.4 515.7L781.5 515.5L783.5 515.5L785.5 515.7L787.5 515.5L789.5 515.9L791.5 515.7L793.5 515.6L795.5 515.4L797.6 515.5L799.6 515.5L801.6 515.6L803.6 515.6L805.6 515.8L807.6 515.9L809.6 515.6L811.6 515.6L813.7 515.7L815.7 515.9L817.7 515.5L819.7 515.6L821.7 515.8L823.7 515.4L825.7 515.5L827.7 515.9L829.8 515.8L831.8 515.6L833.8 515.4L835.8 515.8L837.8 515.7L839.8 515.8L841.8 515.9L843.8 515.8L845.9 515.6L847.9 515.4L849.9 515.5L851.9 515.6L853.9 515.6L855.9 515.4L857.9 515.4L859.9 515.7L862.0 515.7L864.0 515.5L866.0 515.9L868.0 515.6" stroke="#e800e8" stroke-width="2.4" fill="none"/>
<path d="M25.0 405.5L26.0 405.1L27.0 405.3L28.0 405.6L29.0 405.3L30.0 405.5L31.0 405.1L32.0 405.3L33.0 405.6L34.0 405.5L35.0 405.5L36.0 405.2L37.0 405.4L38.0 405.4L39.0 405.3L40.0 405.5L41.0 405.4L42.0 405.7L43.0 405.4L44.0 405.3L45.0 405.2L46.0 405.2L47.0 405.6L48.0 405.2L49.0 405.2L50.0 405.2L51.0 405.4L52.0 405.6L53.0 405.5L54.0 405.6L55.0 405.1L56.0 405.1L57.0 405.6L58.0 405.3L59.0 405.5L60.0 405.3L61.0 405.2L62.0 405.3L63.0 405.2L64.0 405.6L65.0 405.4L66.0 405.3L67.0 405.4L68.0 405.3L69.0 405.1L70.0 405.6L71.0 405.4L72.0 405.7L73.0 405.4L74.0 405.5L75.0 405.2L76.0 405.1L77.0 405.7L78.0 405.6L79.0 405.3L80.0 405.6L81.0 405.6L82.0 405.3L83.0 405.5L84.0 405.7L85.0 405.4L86.0 405.7L87.0 405.2L88.0 405.3L89.0 405.5L90.0 405.2L91.0 405.3L92.0 405.6L93.0 405.4L94.0 405.6L95.0 405.2L96.0 405.2L97.0 405.3L98.0 405.2L99.0 405.7L100.0 405.3L101.0 405.4L102.0 405.2L103.0 405.4L104.0 405.3L105.0 405.3L106.0 405.1L107.0 405.2L108.0 405.6L109.0 405.3L110.0 405.2L111.0 405.2L112.0 405.3L113.0 405.2L114.0 405.1L115.0 405.5L116.0 405.3L117.0 405.2L118.0 405.5L119.0 405.2L120.0 405.3L121.0 405.6L122.0 405.2L123.0 405.4L124.0 405.6L125.0 405.6L126.0 405.2L127.0 405.3L128.0 405.5L129.0 405.3L130.0 405.7L131.0 405.2L132.0 405.7L133.0 405.4L134.0 405.2L135.0 405.4L136.0 405.2L137.0 405.5L138.0 405.3L139.0 405.6L140.0 405.5L141.0 405.3L142.0 405.2L143.0 405.5L144.0 405.2L145.0 405.6L146.0 405.2L147.0 405.4L148.0 405.4L149.0 405.3L150.0 405.6L151.0 405.3L152.0 405.5L153.0 405.4L154.0 405.3L155.0 405.3L156.0 405.2L157.0 405.2L158.0 405.6L159.0 405.3L160.0 405.5L161.0 405.2L162.0 405.4L163.0 405.3L164.0 405.4L165.0 405.3L166.0 405.1L167.0 405.3L168.0 405.2L169.0 405.2L170.0 405.5L171.0 405.3L172.0 405.3L173.0 405.6L174.0 405.6L175.0 405.6L176.0 405.6L177.0 405.2L178.0 405.3L179.0 405.1L180.0 405.5L181.0 405.5L182.0 405.3L183.0 405.3L184.0 405.5L185.0 405.5L186.0 405.2L187.0 405.6L188.0 405.3L189.0 405.5L190.0 405.2L191.0 405.2L192.0 405.6L193.0 405.5L194.0 405.5L195.0 405.1L196.0 405.1L197.0 405.2L198.0 405.2L199.0 405.3L200.0 405.3L201.0 405.1L202.0 405.3L203.0 405.5L204.0 404.3L205.0 403.8L206.0 403.2L207.0 402.9L208.0 402.3L209.0 402.0L210.0 401.2L211.0 400.1L212.0 399.1L213.0 398.7L214.0 397.8L215.0 397.4L216.0 397.2L217.0 397.6L218.0 396.9L219.0 396.0L220.0 395.6L221.0 394.9L222.0 394.8L223.0 393.9L224.0 393.8L225.0 393.1L226.0 392.1L227.0 391.9L228.0 391.2L229.0 390.9L230.0 390.4L231.0 389.5L232.0 388.8L233.0 388.8L234.0 387.9L235.0 387.6L236.0 386.9L237.0 386.4L238.0 385.9L239.0 385.2L240.0 384.6L241.0 383.8L242.0 383.6L243.0 382.9L244.0 382.4L245.0 382.1L246.0 381.0L247.0 380.9L248.0 379.9L249.0 379.7L250.0 379.2L251.0 378.3L252.0 377.9L253.0 377.6L254.0 376.9L255.0 376.3L256.0 375.5L257.0 374.9L258.0 374.5L259.0 374.0L260.0 373.3L261.0 372.8L262.0 372.1L263.0 371.9L264.0 371.3L265.0 370.5L266.0 370.0L267.0 369.6L268.0 369.0L269.0 368.7L270.0 367.8L271.0 367.2L272.0 367.0L273.0 366.0L274.0 365.7L275.0 365.0L276.0 364.7L277.0 364.0L278.0 363.6L279.0 362.7L280.0 362.4L281.0 361.8L282.0 361.2L283.0 360.8L284.0 360.3L285.0 359.3L286.0 358.9L287.0 358.3L288.0 357.7L289.0 357.1L290.0 356.6L291.0 356.0L292.0 355.8L293.0 355.1L294.0 354.3L295.0 353.9L296.0 353.4L297.0 352.8L298.0 352.1L299.0 351.5L300.0 350.9L301.0 350.9L302.0 350.2L303.0 349.3L304.0 349.1L305.0 348.7L306.0 347.9L307.0 347.1L308.0 346.7L309.0 346.1L310.0 345.4L311.0 345.1L312.0 344.2L313.0 344.2L314.0 343.5L315.0 342.9L316.0 342.5L317.0 341.8L318.0 341.0L319.0 340.5L320.0 339.8L321.0 339.2L322.0 339.1L323.0 338.6L324.0 337.7L325.0 337.1L326.0 336.8L327.0 336.4L328.0 335.9L329.0 334.9L330.0 334.7L331.0 334.1L332.0 333.5L333.0 332.7L334.0 332.1L335.0 331.9L336.0 331.0L337.0 330.5L338.0 330.1L339.0 329.4L340.0 329.1L341.0 328.2L342.0 327.5L343.0 327.3L344.0 326.8L345.0 326.3L346.0 325.7L347.0 325.3L348.0 324.7L349.0 323.9L350.0 323.4L351.0 322.6L352.0 322.1L353.0 321.7L354.0 320.9L355.0 320.7L356.0 319.8L357.0 319.4L358.0 319.2L359.0 318.1L360.0 317.5L361.0 317.2L362.0 316.5L363.0 316.3L364.0 315.3L365.0 315.2L366.0 314.7L367.0 314.1L368.0 313.3L369.0 312.7L370.0 312.3L371.0 311.7L372.0 311.1L373.0 310.5L374.0 310.0L375.0 310.1L376.0 310.2L377.0 310.2L378.0 309.8L379.0 309.9L380.0 310.0L381.0 310.0L382.0 309.9L383.0 309.8L384.0 309.8L385.0 309.9L386.0 310.0L387.0 310.3L388.0 310.2L389.0 310.2L390.0 310.3L391.0 310.3L392.0 310.1L393.0 310.2L394.0 309.7L395.0 310.1L396.0 310.1L397.0 309.9L398.0 310.0L399.0 310.3L400.0 310.0L401.0 310.1L402.0 309.9L403.0 309.9L404.0 310.2L405.0 309.7L406.0 309.8L407.0 310.1L408.0 310.0L409.0 309.8L410.0 310.1L411.0 309.9L412.0 310.0L413.0 309.9L414.0 310.0L415.0 310.0L416.0 309.9L417.0 309.8L418.0 309.8L419.0 310.2L420.0 310.0L421.0 309.8L422.0 310.2L423.0 309.9L424.0 309.8L425.0 310.0L426.0 309.9L427.0 310.0L428.0 310.0L429.0 309.8L430.0 310.0L431.0 309.8L432.0 310.0L433.0 310.1L434.0 309.7L435.0 309.9L436.0 309.7L437.0 310.0L438.0 310.2L439.0 310.0L440.0 310.1L441.0 310.2L442.0 309.8L443.0 310.3L444.0 310.1L445.0 309.8L446.0 310.2L447.0 309.9L448.0 309.8L449.0 310.3L450.0 310.0L451.0 310.2L452.0 309.8L453.0 310.2L454.0 309.7L455.0 309.8L456.0 309.9L457.0 309.7L458.0 310.1L459.0 309.8L460.0 309.9L461.0 310.1L462.0 310.0L463.0 310.2L464.0 310.1L465.0 310.2L466.0 310.0L467.0 310.3L468.0 310.2L469.0 309.8L470.0 310.1L471.0 309.9L472.0 310.2L473.0 310.1L474.0 310.2L475.0 309.8L476.0 309.9L477.0 310.1L478.0 310.3L479.0 310.1L480.0 309.7L481.0 310.1L482.0 309.8L483.0 310.0L484.0 310.2L485.0 309.8L486.0 310.3L487.0 310.1L488.0 309.9L489.0 309.8L490.0 310.0L491.0 310.2L492.0 310.0L493.0 309.8L494.0 309.7L495.0 309.8L496.0 310.2L497.0 309.8L498.0 310.0L499.0 309.9L500.0 310.1L501.0 309.9L502.0 309.8L503.0 310.2L504.0 310.0L505.0 310.1L506.0 310.2L507.0 310.3L508.0 309.7L509.0 309.9L510.0 309.8L511.0 310.0L512.0 310.2L513.0 310.2L514.0 309.7L515.0 309.8L516.0 310.2L517.0 310.1L518.0 309.9L519.0 310.0L520.0 309.8L521.0 310.2L522.0 309.9L523.0 310.2L524.0 310.1L525.0 309.7L526.0 309.9L527.0 309.8L528.0 310.2L529.0 310.1L530.0 309.7L531.0 309.8L532.0 309.9L533.0 310.0L534.0 310.0L535.0 309.9L536.0 309.9L537.0 309.7L538.0 310.0L539.0 309.9L540.0 309.7L541.0 310.0L542.0 310.3L543.0 309.7L544.0 309.8L545.0 310.1L546.0 309.9L547.0 309.9L548.0 310.0L549.0 309.9L550.0 310.0L551.0 310.0L552.0 310.3L553.0 310.3L554.0 309.7L555.0 310.0L556.0 310.2L557.0 310.2L558.0 310.2L559.0 310.1L560.0 310.1L561.0 309.9L562.0 309.9L563.0 310.2L564.0 310.2L565.0 310.3L566.0 310.1L567.0 309.9L568.0 310.2L569.0 310.1L570.0 310.0L571.0 310.1L572.0 309.9L573.0 310.0L574.0 309.9L575.0 309.7L576.0 309.9L577.0 309.9L578.0 310.3L579.0 310.0L580.0 309.9L581.0 309.8L582.0 309.8L583.0 309.9L584.0 309.8L585.0 309.7L586.0 310.2L587.0 310.0L588.0 310.0L589.0 310.0L590.0 309.9L591.0 309.8L592.0 309.7L593.0 309.9L594.0 309.9L595.0 310.1L596.0 310.0L597.0 310.3L598.0 309.9L599.0 310.3L600.0 310.1L601.0 309.7L602.0 309.8L603.0 310.0L604.0 310.3L605.0 309.9L606.0 310.2L607.0 310.0L608.0 310.2L609.0 309.7L610.0 310.0L611.0 310.2L612.0 309.9L613.0 309.9L614.0 309.7L615.0 316.9L616.1 324.1L617.1 331.5L618.2 338.3L619.2 345.6L620.3 352.6L621.3 360.0L622.3 367.2L623.4 374.2L624.4 381.1L625.5 388.6L626.5 395.8L627.6 402.7L628.6 409.5L630.0 410.2L631.0 409.3L632.0 408.0L633.0 407.0L634.0 406.9L635.0 407.1L636.0 407.2L637.0 406.9L638.0 407.0L639.0 406.5L640.0 406.5L641.0 406.7L642.0 406.7L643.0 406.5L644.0 406.7L645.0 406.5L646.0 406.3L647.0 406.5L648.0 406.3L649.0 406.7L650.0 406.5L651.0 406.6L652.0 406.6L653.0 406.4L654.0 406.6L655.0 406.3L656.0 406.8L657.0 406.6L658.0 406.9L659.0 406.3L660.0 406.7L661.0 406.7L662.0 406.5L663.0 406.3L664.0 406.4L665.0 406.4L666.0 406.7L667.0 406.3L668.0 406.8L669.0 406.5L670.0 406.6L671.0 406.6L672.0 406.6L673.0 406.7L674.0 406.6L675.0 406.5L676.0 406.7L677.0 406.4L678.0 406.7L679.0 406.7L680.0 406.7L681.0 406.4L682.0 406.7L683.0 406.8L684.0 406.5L685.0 406.4L686.0 406.6L687.0 406.8L688.0 406.3L689.0 406.3L690.0 406.5L691.0 406.6L692.0 406.7L693.0 406.5L694.0 406.8L695.0 406.4L696.0 406.7L697.0 406.3L698.0 406.3L699.0 406.3L700.0 406.3L701.0 406.5L702.0 406.6L703.0 406.4L704.0 406.8L705.0 406.5L706.0 406.3L707.0 406.3L708.0 406.7L709.0 406.8L710.0 406.3L711.0 406.3L712.0 406.7L713.0 406.4L714.0 406.8L715.0 406.5L716.0 406.6L717.0 406.4L718.0 406.7L719.0 406.5L720.0 406.4L721.0 406.8L722.0 406.3L723.0 406.7L724.0 406.3L725.0 406.6L726.0 406.5L727.0 406.7L728.0 406.3L729.0 406.6L730.0 406.5L731.0 406.8L732.0 406.8L733.0 406.6L734.0 406.4L735.0 406.4L736.0 406.4L737.0 406.5L738.0 406.4L739.0 406.3L740.0 406.7L741.0 406.6L742.0 406.4L743.0 406.8L744.0 406.3L745.0 406.5L746.0 406.3L747.0 406.7L748.0 406.7L749.0 406.4L750.0 406.7L751.0 406.7L752.0 406.4L753.0 406.4L754.0 406.5L755.0 406.7L756.0 406.3L757.0 406.6L758.0 406.6L759.0 406.5L760.0 406.5L761.0 406.7L762.0 406.3L763.0 406.7L764.0 406.4L765.0 406.7L766.0 406.7L767.0 406.3L768.0 406.7L769.0 406.8L770.0 406.4L771.0 406.2L772.0 406.3L773.0 406.8L774.0 406.2L775.0 406.7L776.0 406.3L777.0 406.6L778.0 406.2L779.0 406.3L780.0 406.6L781.0 406.2L782.0 406.4L783.0 406.7L784.0 406.6L785.0 406.7L786.0 406.8L787.0 406.2L788.0 406.3L789.0 406.6L790.0 406.6L791.0 406.2L792.0 406.5L793.0 406.3L794.0 406.4L795.0 406.2L796.0 406.2L797.0 406.8L798.0 406.4L799.0 406.7L800.0 406.2L801.0 406.5L802.0 406.2L803.0 406.4L804.0 406.3L805.0 406.6L806.0 406.2L807.0 406.6L808.0 406.5L809.0 406.2L810.0 406.4L811.0 406.4L812.0 406.7L813.0 406.4L814.0 406.3L815.0 406.7L816.0 406.7L817.0 406.6L818.0 406.3L819.0 406.2L820.0 406.3L821.0 406.2L822.0 406.2L823.0 406.4L824.0 406.4L825.0 406.5L826.0 406.4L827.0 406.1L828.0 406.5L829.0 406.5L830.0 406.5L831.0 406.5L832.0 406.5L833.0 406.7L834.0 406.7L835.0 406.6L836.0 406.4L837.0 406.3L838.0 406.4L839.0 406.7L840.0 406.4L841.0 406.4L842.0 406.4L843.0 406.2L844.0 406.7L845.0 406.1L846.0 406.5L847.0 406.7L848.0 406.3L849.0 406.5L850.0 406.3L851.0 406.3L852.0 406.2L853.0 406.2L854.0 406.6L855.0 406.6L856.0 406.7L857.0 406.1L858.0 406.5L859.0 406.3L860.0 406.5L861.0 406.4L862.0 406.3L863.0 406.7L864.0 406.1L865.0 406.6L866.0 406.6L867.0 406.4L868.0 406.4L868.0 408.4L867.0 408.4L866.0 408.6L865.0 408.6L864.0 408.1L863.0 408.7L862.0 408.3L861.0 408.4L860.0 408.5L859.0 408.3L858.0 408.5L857.0 408.1L856.0 408.7L855.0 408.6L854.0 408.6L853.0 408.2L852.0 408.2L851.0 408.3L850.0 408.3L849.0 408.5L848.0 408.3L847.0 408.7L846.0 408.5L845.0 408.1L844.0 408.7L843.0 408.2L842.0 408.4L841.0 408.4L840.0 408.4L839.0 408.7L838.0 408.4L837.0 408.3L836.0 408.4L835.0 408.6L834.0 408.7L833.0 408.7L832.0 408.5L831.0 408.5L830.0 408.5L829.0 408.5L828.0 408.5L827.0 408.1L826.0 408.4L825.0 408.5L824.0 408.4L823.0 408.4L822.0 408.2L821.0 408.2L820.0 408.3L819.0 408.2L818.0 408.3L817.0 408.6L816.0 408.7L815.0 408.7L814.0 408.3L813.0 408.4L812.0 408.7L811.0 408.4L810.0 408.4L809.0 408.2L808.0 408.5L807.0 408.6L806.0 408.2L805.0 408.6L804.0 408.3L803.0 408.4L802.0 408.2L801.0 408.5L800.0 408.2L799.0 408.7L798.0 408.4L797.0 408.8L796.0 408.2L795.0 408.2L794.0 408.4L793.0 408.3L792.0 408.5L791.0 408.2L790.0 408.6L789.0 408.6L788.0 408.3L787.0 408.2L786.0 408.8L785.0 408.7L784.0 408.6L783.0 408.7L782.0 408.4L781.0 408.2L780.0 408.6L779.0 408.3L778.0 408.2L777.0 408.6L776.0 408.3L775.0 408.7L774.0 408.2L773.0 408.8L772.0 408.3L771.0 408.2L770.0 408.4L769.0 408.8L768.0 408.7L767.0 408.3L766.0 408.7L765.0 408.7L764.0 408.4L763.0 408.7L762.0 408.3L761.0 408.7L760.0 408.5L759.0 408.5L758.0 408.6L757.0 408.6L756.0 408.3L755.0 408.7L754.0 408.5L753.0 408.4L752.0 408.4L751.0 408.7L750.0 408.7L749.0 408.4L748.0 408.7L747.0 408.7L746.0 408.3L745.0 408.5L744.0 408.3L743.0 408.8L742.0 408.4L741.0 408.6L740.0 408.7L739.0 408.3L738.0 408.4L737.0 408.5L736.0 408.4L735.0 408.4L734.0 408.4L733.0 408.6L732.0 408.8L731.0 408.8L730.0 408.5L729.0 408.6L728.0 408.3L727.0 408.7L726.0 408.5L725.0 408.6L724.0 408.3L723.0 408.7L722.0 408.3L721.0 408.8L720.0 408.4L719.0 408.5L718.0 408.7L717.0 408.4L716.0 408.6L715.0 408.5L714.0 408.8L713.0 408.4L712.0 408.7L711.0 408.3L710.0 408.3L709.0 408.8L708.0 408.7L707.0 408.3L706.0 408.3L705.0 408.5L704.0 408.8L703.0 408.4L702.0 408.6L701.0 408.5L700.0 408.3L699.0 408.3L698.0 408.3L697.0 408.3L696.0 408.7L695.0 408.4L694.0 408.8L693.0 408.5L692.0 408.7L691.0 408.6L690.0 408.5L689.0 408.3L688.0 408.3L687.0 408.8L686.0 408.6L685.0 408.4L684.0 408.5L683.0 408.8L682.0 408.7L681.0 408.4L680.0 408.7L679.0 408.7L678.0 408.7L677.0 408.4L676.0 408.7L675.0 408.5L674.0 408.6L673.0 408.7L672.0 408.6L671.0 408.6L670.0 408.6L669.0 408.5L668.0 408.8L667.0 408.3L666.0 408.7L665.0 408.4L664.0 408.4L663.0 408.3L662.0 408.5L661.0 408.7L660.0 408.7L659.0 408.3L658.0 408.9L657.0 408.6L656.0 408.8L655.0 408.3L654.0 408.6L653.0 408.4L652.0 408.6L651.0 408.6L650.0 408.5L649.0 408.7L648.0 408.3L647.0 408.5L646.0 408.3L645.0 408.5L644.0 408.7L643.0 408.5L642.0 408.7L641.0 408.7L640.0 408.5L639.0 408.5L638.0 409.0L637.0 408.9L636.0 409.2L635.0 409.1L634.0 408.9L633.0 409.0L632.0 410.0L631.0 411.3L630.0 412.2L628.6 411.5L627.6 404.7L626.5 397.8L625.5 390.6L624.4 383.1L623.4 376.2L622.3 369.2L621.3 362.0L620.3 354.6L619.2 347.6L618.2 340.3L617.1 333.5L616.1 326.1L615.0 318.9L614.0 311.7L613.0 311.9L612.0 311.9L611.0 312.2L610.0 312.0L609.0 311.7L608.0 312.2L607.0 312.0L606.0 312.2L605.0 311.9L604.0 312.3L603.0 312.0L602.0 311.8L601.0 311.7L600.0 312.1L599.0 312.3L598.0 311.9L597.0 312.3L596.0 312.0L595.0 312.1L594.0 311.9L593.0 311.9L592.0 311.7L591.0 311.8L590.0 311.9L589.0 312.0L588.0 312.0L587.0 312.0L586.0 312.2L585.0 311.7L584.0 311.8L583.0 311.9L582.0 311.8L581.0 311.8L580.0 311.9L579.0 312.0L578.0 312.3L577.0 311.9L576.0 311.9L575.0 311.7L574.0 311.9L573.0 312.0L572.0 311.9L571.0 312.1L570.0 312.0L569.0 312.1L568.0 312.2L567.0 311.9L566.0 312.1L565.0 312.3L564.0 312.2L563.0 312.2L562.0 311.9L561.0 311.9L560.0 312.1L559.0 312.1L558.0 312.2L557.0 312.2L556.0 312.2L555.0 312.0L554.0 311.7L553.0 312.3L552.0 312.3L551.0 312.0L550.0 312.0L549.0 311.9L548.0 312.0L547.0 311.9L546.0 311.9L545.0 312.1L544.0 311.8L543.0 311.7L542.0 312.3L541.0 312.0L540.0 311.7L539.0 311.9L538.0 312.0L537.0 311.7L536.0 311.9L535.0 311.9L534.0 312.0L533.0 312.0L532.0 311.9L531.0 311.8L530.0 311.7L529.0 312.1L528.0 312.2L527.0 311.8L526.0 311.9L525.0 311.7L524.0 312.1L523.0 312.2L522.0 311.9L521.0 312.2L520.0 311.8L519.0 312.0L518.0 311.9L517.0 312.1L516.0 312.2L515.0 311.8L514.0 311.7L513.0 312.2L512.0 312.2L511.0 312.0L510.0 311.8L509.0 311.9L508.0 311.7L507.0 312.3L506.0 312.2L505.0 312.1L504.0 312.0L503.0 312.2L502.0 311.8L501.0 311.9L500.0 312.1L499.0 311.9L498.0 312.0L497.0 311.8L496.0 312.2L495.0 311.8L494.0 311.7L493.0 311.8L492.0 312.0L491.0 312.2L490.0 312.0L489.0 311.8L488.0 311.9L487.0 312.1L486.0 312.3L485.0 311.8L484.0 312.2L483.0 312.0L482.0 311.8L481.0 312.1L480.0 311.7L479.0 312.1L478.0 312.3L477.0 312.1L476.0 311.9L475.0 311.8L474.0 312.2L473.0 312.1L472.0 312.2L471.0 311.9L470.0 312.1L469.0 311.8L468.0 312.2L467.0 312.3L466.0 312.0L465.0 312.2L464.0 312.1L463.0 312.2L462.0 312.0L461.0 312.1L460.0 311.9L459.0 311.8L458.0 312.1L457.0 311.7L456.0 311.9L455.0 311.8L454.0 311.7L453.0 312.2L452.0 311.8L451.0 312.2L450.0 312.0L449.0 312.3L448.0 311.8L447.0 311.9L446.0 312.2L445.0 311.8L444.0 312.1L443.0 312.3L442.0 311.8L441.0 312.2L440.0 312.1L439.0 312.0L438.0 312.2L437.0 312.0L436.0 311.7L435.0 311.9L434.0 311.7L433.0 312.1L432.0 312.0L431.0 311.8L430.0 312.0L429.0 311.8L428.0 312.0L427.0 312.0L426.0 311.9L425.0 312.0L424.0 311.8L423.0 311.9L422.0 312.2L421.0 311.8L420.0 312.0L419.0 312.2L418.0 311.8L417.0 311.8L416.0 311.9L415.0 312.0L414.0 312.0L413.0 311.9L412.0 312.0L411.0 311.9L410.0 312.1L409.0 311.8L408.0 312.0L407.0 312.1L406.0 311.8L405.0 311.7L404.0 312.2L403.0 311.9L402.0 311.9L401.0 312.1L400.0 312.0L399.0 312.3L398.0 312.0L397.0 311.9L396.0 312.1L395.0 312.1L394.0 311.7L393.0 312.2L392.0 312.1L391.0 312.3L390.0 312.3L389.0 312.2L388.0 312.2L387.0 312.3L386.0 312.0L385.0 311.9L384.0 311.8L383.0 311.8L382.0 311.9L381.0 312.0L380.0 312.0L379.0 311.9L378.0 311.8L377.0 312.2L376.0 312.2L375.0 312.1L374.0 312.0L373.0 312.5L372.0 313.1L371.0 313.7L370.0 314.3L369.0 314.7L368.0 315.3L367.0 316.1L366.0 316.7L365.0 317.2L364.0 317.3L363.0 318.3L362.0 318.5L361.0 319.2L360.0 319.5L359.0 320.1L358.0 321.2L357.0 321.4L356.0 321.8L355.0 322.7L354.0 322.9L353.0 323.7L352.0 324.1L351.0 324.6L350.0 325.4L349.0 325.9L348.0 326.7L347.0 327.3L346.0 327.7L345.0 328.3L344.0 328.8L343.0 329.3L342.0 329.5L341.0 330.2L340.0 331.1L339.0 331.4L338.0 332.1L337.0 332.5L336.0 333.0L335.0 333.9L334.0 334.1L333.0 334.7L332.0 335.5L331.0 336.1L330.0 336.7L329.0 336.9L328.0 337.9L327.0 338.4L326.0 338.8L325.0 339.1L324.0 339.7L323.0 340.6L322.0 341.1L321.0 341.2L320.0 341.8L319.0 342.5L318.0 343.0L317.0 343.8L316.0 344.5L315.0 344.9L314.0 345.5L313.0 346.2L312.0 346.2L311.0 347.1L310.0 347.4L309.0 348.1L308.0 348.7L307.0 349.1L306.0 349.9L305.0 350.7L304.0 351.1L303.0 351.3L302.0 352.2L301.0 352.9L300.0 352.9L299.0 353.5L298.0 354.1L297.0 354.8L296.0 355.4L295.0 355.9L294.0 356.3L293.0 357.1L292.0 357.8L291.0 358.0L290.0 358.6L289.0 359.1L288.0 359.7L287.0 360.3L286.0 360.9L285.0 361.3L284.0 362.3L283.0 362.8L282.0 363.2L281.0 363.8L280.0 364.4L279.0 364.7L278.0 365.6L277.0 366.0L276.0 366.7L275.0 367.0L274.0 367.7L273.0 368.0L272.0 369.0L271.0 369.2L270.0 369.8L269.0 370.7L268.0 371.0L267.0 371.6L266.0 372.0L265.0 372.5L264.0 373.3L263.0 373.9L262.0 374.1L261.0 374.8L260.0 375.3L259.0 376.0L258.0 376.5L257.0 376.9L256.0 377.5L255.0 378.3L254.0 378.9L253.0 379.6L252.0 379.9L251.0 380.3L250.0 381.2L249.0 381.7L248.0 381.9L247.0 382.9L246.0 383.0L245.0 384.1L244.0 384.4L243.0 384.9L242.0 385.6L241.0 385.8L240.0 386.6L239.0 387.2L238.0 387.9L237.0 388.4L236.0 388.9L235.0 389.6L234.0 389.9L233.0 390.8L232.0 390.8L231.0 391.5L230.0 392.4L229.0 392.9L228.0 393.2L227.0 393.9L226.0 394.1L225.0 395.1L224.0 395.8L223.0 395.9L222.0 396.8L221.0 396.9L220.0 397.6L219.0 398.0L218.0 398.9L217.0 399.6L216.0 399.2L215.0 399.4L214.0 399.8L213.0 400.7L212.0 401.1L211.0 402.1L210.0 403.2L209.0 404.0L208.0 404.3L207.0 404.9L206.0 405.2L205.0 405.8L204.0 406.3L203.0 407.5L202.0 407.3L201.0 407.1L200.0 407.3L199.0 407.3L198.0 407.2L197.0 407.2L196.0 407.1L195.0 407.1L194.0 407.5L193.0 407.5L192.0 407.6L191.0 407.2L190.0 407.2L189.0 407.5L188.0 407.3L187.0 407.6L186.0 407.2L185.0 407.5L184.0 407.5L183.0 407.3L182.0 407.3L181.0 407.5L180.0 407.5L179.0 407.1L178.0 407.3L177.0 407.2L176.0 407.6L175.0 407.6L174.0 407.6L173.0 407.6L172.0 407.3L171.0 407.3L170.0 407.5L169.0 407.2L168.0 407.2L167.0 407.3L166.0 407.1L165.0 407.3L164.0 407.4L163.0 407.3L162.0 407.4L161.0 407.2L160.0 407.5L159.0 407.3L158.0 407.6L157.0 407.2L156.0 407.2L155.0 407.3L154.0 407.3L153.0 407.4L152.0 407.5L151.0 407.3L150.0 407.6L149.0 407.3L148.0 407.4L147.0 407.4L146.0 407.2L145.0 407.6L144.0 407.2L143.0 407.5L142.0 407.2L141.0 407.3L140.0 407.5L139.0 407.6L138.0 407.3L137.0 407.5L136.0 407.2L135.0 407.4L134.0 407.2L133.0 407.4L132.0 407.7L131.0 407.2L130.0 407.7L129.0 407.3L128.0 407.5L127.0 407.3L126.0 407.2L125.0 407.6L124.0 407.6L123.0 407.4L122.0 407.2L121.0 407.6L120.0 407.3L119.0 407.2L118.0 407.5L117.0 407.2L116.0 407.3L115.0 407.5L114.0 407.1L113.0 407.2L112.0 407.3L111.0 407.2L110.0 407.2L109.0 407.3L108.0 407.6L107.0 407.2L106.0 407.1L105.0 407.3L104.0 407.3L103.0 407.4L102.0 407.2L101.0 407.4L100.0 407.3L99.0 407.7L98.0 407.2L97.0 407.3L96.0 407.2L95.0 407.2L94.0 407.6L93.0 407.4L92.0 407.6L91.0 407.3L90.0 407.2L89.0 407.5L88.0 407.3L87.0 407.2L86.0 407.7L85.0 407.4L84.0 407.7L83.0 407.5L82.0 407.3L81.0 407.6L80.0 407.6L79.0 407.3L78.0 407.6L77.0 407.7L76.0 407.1L75.0 407.2L74.0 407.5L73.0 407.4L72.0 407.7L71.0 407.4L70.0 407.6L69.0 407.1L68.0 407.3L67.0 407.4L66.0 407.3L65.0 407.4L64.0 407.6L63.0 407.2L62.0 407.3L61.0 407.2L60.0 407.3L59.0 407.5L58.0 407.3L57.0 407.6L56.0 407.1L55.0 407.1L54.0 407.6L53.0 407.5L52.0 407.6L51.0 407.4L50.0 407.2L49.0 407.2L48.0 407.2L47.0 407.6L46.0 407.2L45.0 407.2L44.0 407.3L43.0 407.4L42.0 407.7L41.0 407.4L40.0 407.5L39.0 407.3L38.0 407.4L37.0 407.4L36.0 407.2L35.0 407.5L34.0 407.5L33.0 407.6L32.0 407.3L31.0 407.1L30.0 407.5L29.0 407.3L28.0 407.6L27.0 407.3L26.0 407.1L25.0 407.5Z" fill="#ecec00" stroke="#ecec00" stroke-width="1.1" stroke-linejoin="round"/>
<path d="M203 30.45V568.7" stroke="#c8a800" stroke-width="1.4" fill="none"/><path d="M374.5 30.45V568.7" stroke="#e0c000" stroke-width="1.2" stroke-dasharray="2.4 1.9" fill="none"/>
<path d="M182 30.45h9l-4.5 8z" fill="#e8a000"/>
<path d="M851.3 481.4l6.5-4.2v8.4z" fill="#e800e8"/><path d="M857 481.4H870.5" stroke="#e800e8" stroke-width="1.2"/>
<circle cx="8.7" cy="132.6" r="6.9" fill="#00e400" stroke="#d0d0d0" stroke-width="1.3"/><text x="8.7" y="136.2" font-size="10" text-anchor="middle" fill="#000" font-family="Liberation Sans, sans-serif">4</text><path d="M15.8 133.1H21" stroke="#00e400" stroke-width="1.5"/><path d="M20 129.0l5.4 4.1l-5.4 4.1z" fill="#00e400"/><circle cx="8.7" cy="244.7" r="6.9" fill="#00ecec" stroke="#d0d0d0" stroke-width="1.3"/><text x="8.7" y="248.29999999999998" font-size="10" text-anchor="middle" fill="#000" font-family="Liberation Sans, sans-serif">2</text><path d="M15.8 245.2H21" stroke="#00ecec" stroke-width="1.5"/><path d="M20 241.1l5.4 4.1l-5.4 4.1z" fill="#00ecec"/><circle cx="8.7" cy="407" r="6.9" fill="#ecec00" stroke="#d0d0d0" stroke-width="1.3"/><text x="8.7" y="410.6" font-size="10" text-anchor="middle" fill="#000" font-family="Liberation Sans, sans-serif">1</text><path d="M15.8 407.5H21" stroke="#ecec00" stroke-width="1.5"/><path d="M20 403.4l5.4 4.1l-5.4 4.1z" fill="#ecec00"/><circle cx="8.7" cy="515.3" r="6.9" fill="#e800e8" stroke="#d0d0d0" stroke-width="1.3"/><text x="8.7" y="518.9" font-size="10" text-anchor="middle" fill="#000" font-family="Liberation Sans, sans-serif">3</text><path d="M15.8 515.8H21" stroke="#e800e8" stroke-width="1.5"/><path d="M20 511.69999999999993l5.4 4.1l-5.4 4.1z" fill="#e800e8"/>
<circle cx="194.4" cy="84.3" r="4.8" fill="#e89800"/><text x="194.4" y="87.5" font-size="10.5" text-anchor="middle" fill="#000" font-family="Liberation Sans, sans-serif">a</text><circle cx="365.7" cy="84.4" r="4.8" fill="#e89800"/><text x="365.7" y="87.60000000000001" font-size="10.5" text-anchor="middle" fill="#000" font-family="Liberation Sans, sans-serif">b</text>
<text x="48.3" y="49.6" font-size="10" fill="#fff" textLength="85" lengthAdjust="spacingAndGlyphs" font-family="Liberation Sans, sans-serif">TPS543C20_2Phase</text><text x="48.3" y="62.4" font-size="10" fill="#fff" textLength="90.8" lengthAdjust="spacingAndGlyphs" font-family="Liberation Sans, sans-serif">VIN=12V, VOUT=0.9V</text><text x="48.3" y="75.2" font-size="10" fill="#fff" textLength="37.7" lengthAdjust="spacingAndGlyphs" font-family="Liberation Sans, sans-serif">IOUT=5A</text><text x="48.3" y="88.0" font-size="10" fill="#fff" textLength="57" lengthAdjust="spacingAndGlyphs" font-family="Liberation Sans, sans-serif">FSW=500KHz</text><text x="37" y="153.8" font-size="10" fill="#00e400" textLength="45" lengthAdjust="spacingAndGlyphs" font-family="Liberation Sans, sans-serif">SW_SLAVE</text><text x="28.3" y="264.6" font-size="10" fill="#00ecec" textLength="53" lengthAdjust="spacingAndGlyphs" font-family="Liberation Sans, sans-serif">SW_MASTER</text><text x="26.2" y="423.5" font-size="10" fill="#ecec00" textLength="22.6" lengthAdjust="spacingAndGlyphs" font-family="Liberation Sans, sans-serif">VOUT</text><text x="19.4" y="533" font-size="10" fill="#e800e8" textLength="53.6" lengthAdjust="spacingAndGlyphs" font-family="Liberation Sans, sans-serif">EN _MASTER</text>

</svg>
</body></html>
